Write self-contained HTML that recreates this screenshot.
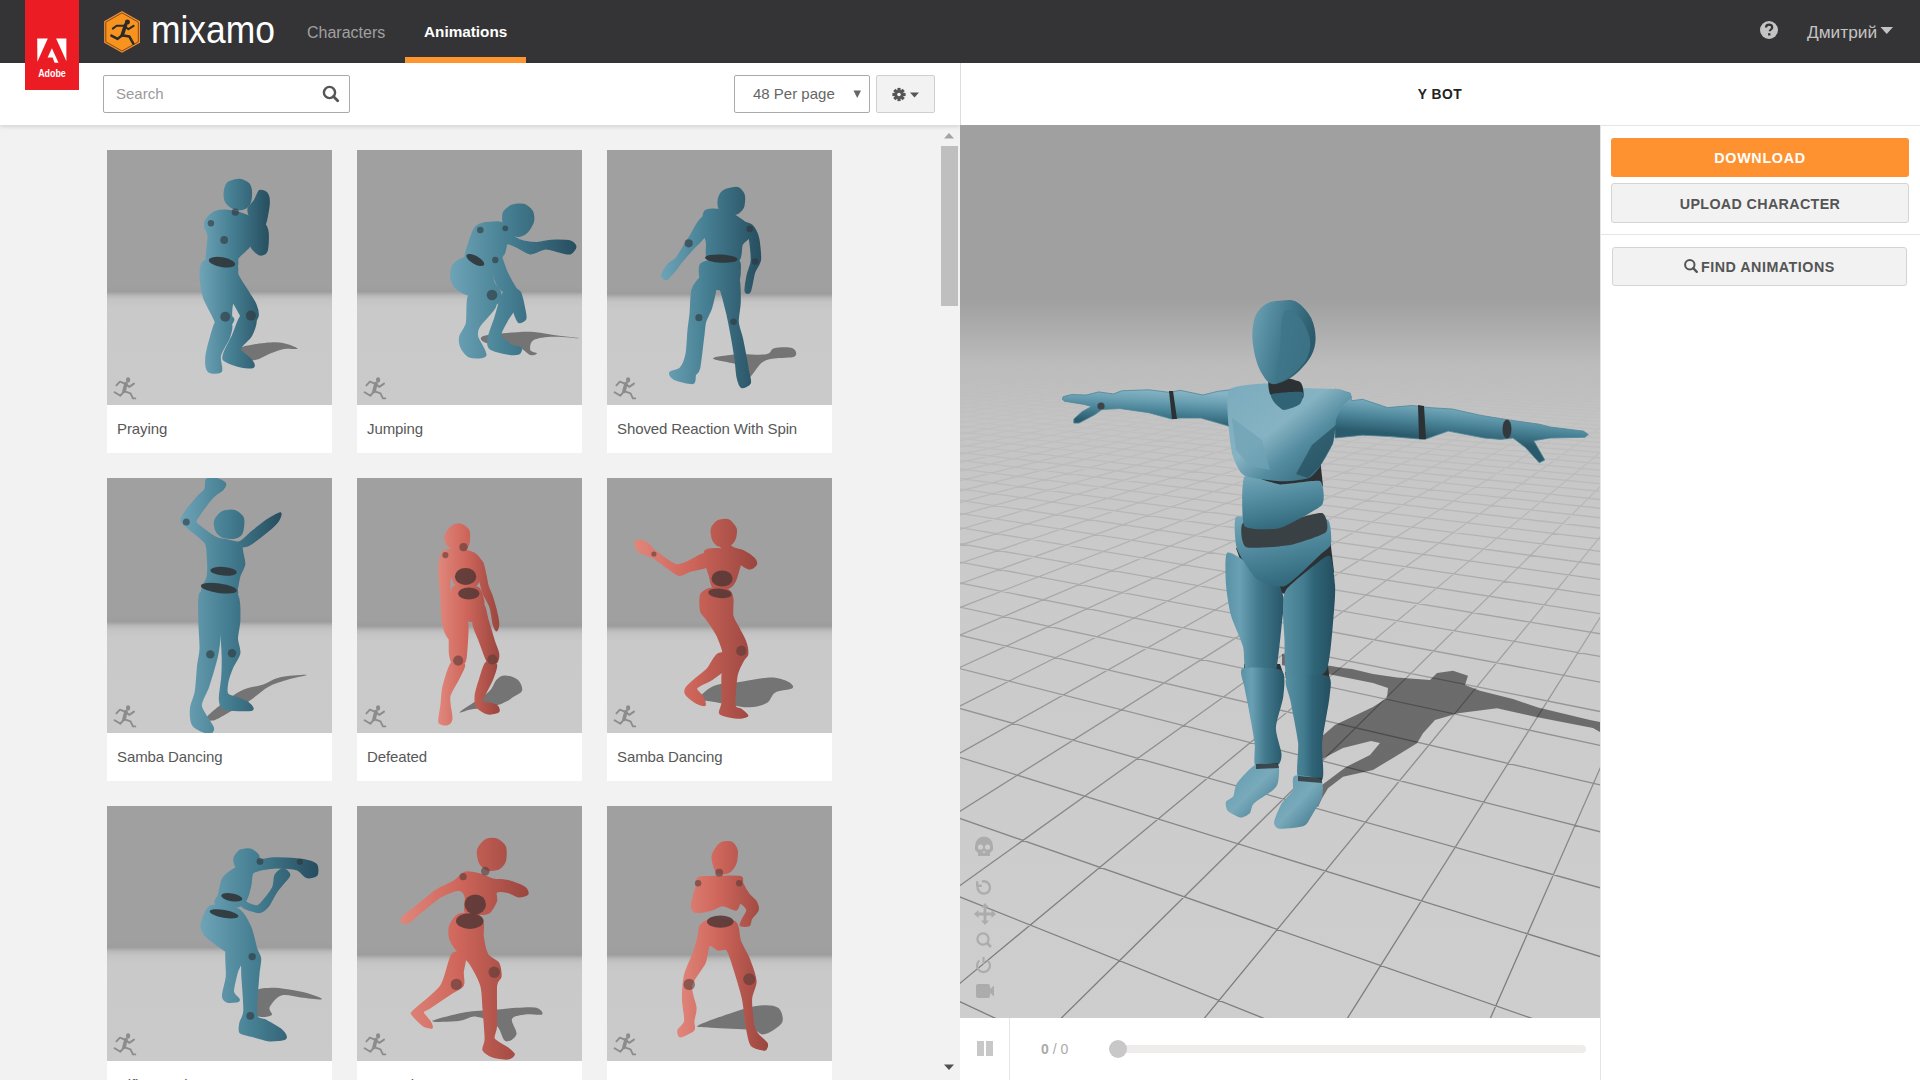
<!DOCTYPE html><html><head><meta charset="utf-8"><style>
*{box-sizing:border-box;margin:0;padding:0}
html,body{width:1920px;height:1080px;overflow:hidden;background:#f2f2f2;font-family:"Liberation Sans",sans-serif}
.abs{position:absolute}
.nav{left:0;top:0;width:1920px;height:63px;background:#343436}
.txt{white-space:nowrap;line-height:1}
</style></head><body>
<div class="abs nav"></div>
<div class="abs" style="left:25px;top:0;width:54px;height:90px;background:#ec1c24;z-index:10"></div>
<svg class="abs" style="left:25px;top:0;z-index:11" width="54" height="89" viewBox="0 0 54 89">
<path d="M12.2 38.6H22.8L12.4 61.7Z" fill="#fff"/><path d="M31.1 38.6H41.4V61.2Z" fill="#fff"/>
<path d="M26.9 48.3L33.5 62.8H29.6L27.6 57.4H22.6Z" fill="#fff"/>
<text x="27" y="76.8" text-anchor="middle" font-family="Liberation Sans" font-weight="bold" font-size="11" fill="#fff" textLength="27.6" lengthAdjust="spacingAndGlyphs">Adobe</text></svg>
<svg class="abs" style="left:102px;top:10px" width="40" height="44" viewBox="0 0 40 44">
<path d="M20 1.1L38 11.2V32.8L20 42.8L2.1 32.8V11.2Z" fill="#e88f3c"/>
<path d="M20 2.9L36.3 12.2V31.8L20 41L3.8 31.8V12.2Z" fill="#f7931e" stroke="#8a4a12" stroke-width="1"/>
<g fill="none" stroke="#2a2a2a" stroke-linecap="round" stroke-linejoin="round">
<circle cx="25.4" cy="11.9" r="2.5" fill="#2a2a2a" stroke="none"/>
<path d="M23.6 14.8L20.2 25.2" stroke-width="3.6"/>
<path d="M22.5 15.8L14.6 15.8L10.8 18.6M23.4 16.8L26.4 19.2L31.6 15.8" stroke-width="2"/>
<path d="M20.2 25.2L15.6 28.9L9.4 25.6M21.2 25.4L27.4 26.6L31.3 33.6" stroke-width="2.5"/>
</g></svg>
<svg class="abs" style="left:148px;top:8px" width="132" height="44"><text x="3" y="35" font-family="Liberation Sans" font-size="39" fill="#fff" textLength="124" lengthAdjust="spacingAndGlyphs">mixamo</text></svg>
<div class="abs txt" style="left:307px;top:24.5px;font-size:16px;color:#a0a0a0">Characters</div>
<div class="abs txt" style="left:424px;top:24px;font-size:15.3px;font-weight:bold;color:#fff">Animations</div>
<div class="abs" style="left:405px;top:57px;width:121px;height:6px;background:#ff9530"></div>
<svg class="abs" style="left:1759px;top:20px" width="20" height="20" viewBox="0 0 20 20"><circle cx="10" cy="10" r="9" fill="#c4c4c4"/>
<path d="M7 7.6c0-1.8 1.3-2.9 3.1-2.9s3.1 1 3.1 2.7c0 2-2.4 2.2-2.4 3.9" fill="none" stroke="#343436" stroke-width="2.2"/><rect x="9.1" y="13.2" width="2.3" height="2.3" fill="#343436"/></svg>
<div class="abs txt" style="left:1807px;top:23.5px;font-size:17.3px;color:#c4c4c4">Дмитрий</div>
<svg class="abs" style="left:1880px;top:26px" width="14" height="9"><path d="M0.5 1h12.5l-6.25 7z" fill="#c4c4c4"/></svg>
<div class="abs" style="left:0;top:63px;width:960px;height:62px;background:#fff;box-shadow:0 2px 4px rgba(0,0,0,0.12)"></div>
<div class="abs" style="left:960px;top:63px;width:960px;height:62px;background:#fff;border-left:1px solid #dcdcdc"></div>
<div class="abs" style="left:103px;top:75px;width:247px;height:38px;border:1px solid #aaa;border-radius:2px;background:#fff"></div>
<div class="abs txt" style="left:116px;top:86px;font-size:15px;color:#9a9a9a">Search</div>
<svg class="abs" style="left:321px;top:84px" width="20" height="20" viewBox="0 0 20 20"><circle cx="8.5" cy="8.5" r="5.6" fill="none" stroke="#555" stroke-width="2.4"/><path d="M12.5 12.5l4.2 4.2" stroke="#555" stroke-width="2.8" stroke-linecap="round"/></svg>
<div class="abs" style="left:734px;top:75px;width:136px;height:38px;border:1px solid #aaa;border-radius:2px;background:#fff"></div>
<div class="abs txt" style="left:753px;top:86px;font-size:15px;color:#666">48 Per page</div>
<svg class="abs" style="left:853px;top:90px" width="9" height="9"><path d="M0.5 0.5h7.5l-3.75 7.5z" fill="#666"/></svg>
<div class="abs" style="left:876px;top:75px;width:59px;height:38px;border:1px solid #cfcfcf;border-radius:2px;background:#f2f2f2"></div>
<svg class="abs" style="left:890px;top:86px" width="32" height="17" viewBox="0 0 32 17">
<g transform="translate(9,8.5)" fill="#555"><circle r="4.6"/>
<g><rect x="-1.6" y="-6.6" width="3.2" height="3.2" transform="rotate(0)"/><rect x="-1.6" y="-6.6" width="3.2" height="3.2" transform="rotate(45)"/><rect x="-1.6" y="-6.6" width="3.2" height="3.2" transform="rotate(90)"/><rect x="-1.6" y="-6.6" width="3.2" height="3.2" transform="rotate(135)"/><rect x="-1.6" y="-6.6" width="3.2" height="3.2" transform="rotate(180)"/><rect x="-1.6" y="-6.6" width="3.2" height="3.2" transform="rotate(225)"/><rect x="-1.6" y="-6.6" width="3.2" height="3.2" transform="rotate(270)"/><rect x="-1.6" y="-6.6" width="3.2" height="3.2" transform="rotate(315)"/></g>
<circle r="1.8" fill="#f2f2f2"/></g>
<path d="M20 6.5h9l-4.5 5z" fill="#555"/></svg>
<div class="abs" style="left:941px;top:146px;width:17px;height:160px;background:#bfbfbf"></div>
<svg class="abs" style="left:943px;top:131px" width="12" height="9"><path d="M1 7.5h10l-5 -5.5z" fill="#a3a3a3"/></svg>
<svg class="abs" style="left:943px;top:1063px" width="12" height="9"><path d="M1 1.5h10l-5 5.5z" fill="#505050"/></svg>
<div class="abs" style="left:107px;top:150px;width:225px;height:303px;background:#fff"></div>
<div class="abs" style="left:107px;top:150px;width:225px;height:255px;background:linear-gradient(#a0a0a0 0px,#a0a0a0 134.7px,#9d9d9d 141.7px,#b8b8b8 145.7px,#c4c4c4 149.7px,#c9c9c9 157.7px,#cacaca 255px)"></div>
<div class="abs txt" style="left:117px;top:421px;font-size:15px;color:#585858;letter-spacing:-0.1px">Praying</div>
<div class="abs" style="left:357px;top:150px;width:225px;height:303px;background:#fff"></div>
<div class="abs" style="left:357px;top:150px;width:225px;height:255px;background:linear-gradient(#a0a0a0 0px,#a0a0a0 134.7px,#9d9d9d 141.7px,#b8b8b8 145.7px,#c4c4c4 149.7px,#c9c9c9 157.7px,#cacaca 255px)"></div>
<div class="abs txt" style="left:367px;top:421px;font-size:15px;color:#585858;letter-spacing:-0.1px">Jumping</div>
<div class="abs" style="left:607px;top:150px;width:225px;height:303px;background:#fff"></div>
<div class="abs" style="left:607px;top:150px;width:225px;height:255px;background:linear-gradient(#a0a0a0 0px,#a0a0a0 137.0px,#9d9d9d 144.0px,#b8b8b8 148.0px,#c4c4c4 152.0px,#c9c9c9 160.0px,#cacaca 255px)"></div>
<div class="abs txt" style="left:617px;top:421px;font-size:15px;color:#585858;letter-spacing:-0.1px">Shoved Reaction With Spin</div>
<div class="abs" style="left:107px;top:478px;width:225px;height:303px;background:#fff"></div>
<div class="abs" style="left:107px;top:478px;width:225px;height:255px;background:linear-gradient(#a0a0a0 0px,#a0a0a0 136.7px,#9d9d9d 143.7px,#b8b8b8 147.7px,#c4c4c4 151.7px,#c9c9c9 159.7px,#cacaca 255px)"></div>
<div class="abs txt" style="left:117px;top:749px;font-size:15px;color:#585858;letter-spacing:-0.1px">Samba Dancing</div>
<div class="abs" style="left:357px;top:478px;width:225px;height:303px;background:#fff"></div>
<div class="abs" style="left:357px;top:478px;width:225px;height:255px;background:linear-gradient(#a0a0a0 0px,#a0a0a0 141.0px,#9d9d9d 148.0px,#b8b8b8 152.0px,#c4c4c4 156.0px,#c9c9c9 164.0px,#cacaca 255px)"></div>
<div class="abs txt" style="left:367px;top:749px;font-size:15px;color:#585858;letter-spacing:-0.1px">Defeated</div>
<div class="abs" style="left:607px;top:478px;width:225px;height:303px;background:#fff"></div>
<div class="abs" style="left:607px;top:478px;width:225px;height:255px;background:linear-gradient(#a0a0a0 0px,#a0a0a0 141.0px,#9d9d9d 148.0px,#b8b8b8 152.0px,#c4c4c4 156.0px,#c9c9c9 164.0px,#cacaca 255px)"></div>
<div class="abs txt" style="left:617px;top:749px;font-size:15px;color:#585858;letter-spacing:-0.1px">Samba Dancing</div>
<div class="abs" style="left:107px;top:806px;width:225px;height:303px;background:#fff"></div>
<div class="abs" style="left:107px;top:806px;width:225px;height:255px;background:linear-gradient(#a0a0a0 0px,#a0a0a0 134.3px,#9d9d9d 141.3px,#b8b8b8 145.3px,#c4c4c4 149.3px,#c9c9c9 157.3px,#cacaca 255px)"></div>
<div class="abs txt" style="left:117px;top:1077px;font-size:15px;color:#585858;letter-spacing:-0.1px">Rifle Punch</div>
<div class="abs" style="left:357px;top:806px;width:225px;height:303px;background:#fff"></div>
<div class="abs" style="left:357px;top:806px;width:225px;height:255px;background:linear-gradient(#a0a0a0 0px,#a0a0a0 141.7px,#9d9d9d 148.7px,#b8b8b8 152.7px,#c4c4c4 156.7px,#c9c9c9 164.7px,#cacaca 255px)"></div>
<div class="abs txt" style="left:367px;top:1077px;font-size:15px;color:#585858;letter-spacing:-0.1px">Capoeira</div>
<div class="abs" style="left:607px;top:806px;width:225px;height:303px;background:#fff"></div>
<div class="abs" style="left:607px;top:806px;width:225px;height:255px;background:linear-gradient(#a0a0a0 0px,#a0a0a0 141.7px,#9d9d9d 148.7px,#b8b8b8 152.7px,#c4c4c4 156.7px,#c9c9c9 164.7px,#cacaca 255px)"></div>
<div class="abs txt" style="left:617px;top:1077px;font-size:15px;color:#585858;letter-spacing:-0.1px">Taunt</div>
<svg class="abs" style="left:0;top:0" width="960" height="1080" viewBox="0 0 960 1080"><defs>
<clipPath id="tc00"><rect x="107" y="150" width="225" height="255"/></clipPath>
<clipPath id="tc01"><rect x="357" y="150" width="225" height="255"/></clipPath>
<clipPath id="tc02"><rect x="607" y="150" width="225" height="255"/></clipPath>
<clipPath id="tc10"><rect x="107" y="478" width="225" height="255"/></clipPath>
<clipPath id="tc11"><rect x="357" y="478" width="225" height="255"/></clipPath>
<clipPath id="tc12"><rect x="607" y="478" width="225" height="255"/></clipPath>
<clipPath id="tc20"><rect x="107" y="806" width="225" height="255"/></clipPath>
<clipPath id="tc21"><rect x="357" y="806" width="225" height="255"/></clipPath>
<clipPath id="tc22"><rect x="607" y="806" width="225" height="255"/></clipPath>
</defs>
<defs><linearGradient id="gt0" gradientUnits="userSpaceOnUse" x1="201" y1="0" x2="269" y2="0"><stop offset="0" stop-color="#6ea3b6"/><stop offset="0.45" stop-color="#467f93"/><stop offset="1" stop-color="#274f60"/></linearGradient></defs>
<g clip-path="url(#tc00)">
<path d="M237.6 348.9C239.4 346.7 246.8 345.6 253.1 344.4C259.4 343.3 269.4 342.2 275.3 342.2C281.3 342.2 285.0 343.3 288.7 344.4C292.4 345.6 298.3 348.1 297.6 348.9C296.8 349.6 288.7 348.1 284.2 348.9C279.8 349.6 275.7 351.5 270.9 353.3C266.1 355.2 260.1 359.3 255.3 360.0C250.5 360.7 245.0 359.6 242.0 357.8C239.0 355.9 235.7 351.1 237.6 348.9Z" fill="#747474" />
<path d="M217.6 320.0C220.2 318.2 229.4 322.1 230.9 324.4C232.4 326.8 230.1 333.6 228.7 337.8C227.2 341.9 220.8 351.1 219.8 355.6C218.7 360.0 222.4 369.0 220.9 371.1C219.4 373.2 210.6 372.9 208.7 371.1C206.7 369.3 206.1 362.2 206.4 357.8C206.7 353.3 209.4 342.8 210.9 337.8C212.4 332.7 214.9 321.8 217.6 320.0Z" fill="url(#gt0)" stroke="url(#gt0)" stroke-width="2.4" stroke-linejoin="round"/>
<path d="M242.0 315.6C245.0 313.5 254.1 317.3 255.3 320.0C256.5 322.7 253.0 331.7 250.9 335.6C248.8 339.4 239.8 345.6 239.8 348.9C239.8 352.1 249.1 357.6 250.9 360.0C252.7 362.4 254.3 365.8 253.1 366.7C251.9 367.6 245.9 367.6 242.0 366.7C238.1 365.8 226.4 362.1 224.2 360.0C222.0 357.9 224.1 354.4 225.3 351.1C226.5 347.9 230.9 340.3 233.1 335.6C235.3 330.8 239.0 317.6 242.0 315.6Z" fill="url(#gt0)" stroke="url(#gt0)" stroke-width="2.4" stroke-linejoin="round"/>
<path d="M202.0 264.4C203.3 261.8 206.4 260.0 210.9 260.0C215.3 260.0 231.8 262.4 235.3 264.4C238.9 266.5 235.8 271.7 237.6 275.6C239.3 279.4 246.3 289.5 248.7 293.3C251.0 297.2 254.1 301.5 255.3 304.4C256.5 307.4 257.9 313.2 257.6 315.6C257.3 317.9 254.9 321.6 253.1 322.2C251.3 322.8 246.9 322.7 244.2 320.0C241.6 317.3 234.9 302.8 233.1 302.2C231.3 301.6 230.9 313.2 230.9 315.6C230.9 317.9 233.7 318.2 233.1 320.0C232.5 321.8 228.5 328.3 226.4 328.9C224.4 329.5 219.3 326.2 217.6 324.4C215.8 322.7 214.9 319.1 213.1 315.6C211.3 312.0 205.9 302.5 204.2 297.8C202.6 293.0 201.2 284.4 200.9 280.0C200.6 275.6 200.7 267.1 202.0 264.4Z" fill="url(#gt0)" stroke="url(#gt0)" stroke-width="2.4" stroke-linejoin="round"/>
<path d="M206.4 220.0C207.8 218.1 212.1 213.4 215.3 212.2C218.6 211.0 226.7 210.7 230.9 211.1C235.0 211.6 243.5 214.4 246.4 215.6C249.4 216.7 250.7 218.8 253.1 220.0C255.5 221.2 262.3 222.7 264.2 224.4C266.1 226.2 267.3 229.8 267.6 233.3C267.9 236.9 267.5 248.3 266.4 251.1C265.4 253.9 261.6 254.7 259.8 254.4C258.0 254.1 254.6 250.5 253.1 248.9C251.6 247.3 249.3 242.5 248.7 242.2C248.1 241.9 250.1 244.6 248.7 246.7C247.2 248.7 239.3 255.1 237.6 257.8C235.8 260.4 239.2 265.8 235.3 266.7C231.5 267.6 212.4 266.8 208.7 264.4C205.0 262.1 207.6 252.7 207.6 248.9C207.6 245.0 209.0 238.5 208.7 235.6C208.4 232.6 205.6 228.7 205.3 226.7C205.0 224.6 205.1 221.9 206.4 220.0Z" fill="url(#gt0)" stroke="url(#gt0)" stroke-width="2.4" stroke-linejoin="round"/>
<path d="M229.8 182.2C231.6 181.5 237.3 179.7 239.8 180.0C242.3 180.3 247.2 182.7 248.7 184.4C250.1 186.2 250.9 190.7 250.9 193.3C250.9 196.0 249.9 202.4 248.7 204.4C247.5 206.5 244.1 208.4 242.0 208.9C239.9 209.3 235.2 208.7 233.1 207.8C231.0 206.9 227.6 204.1 226.4 202.2C225.3 200.3 224.7 195.6 224.7 193.3C224.7 191.1 225.8 187.0 226.4 185.6C227.1 184.1 228.0 183.0 229.8 182.2Z" fill="url(#gt0)" stroke="url(#gt0)" stroke-width="2.4" stroke-linejoin="round"/>
<path d="M259.8 191.1C261.3 190.2 265.3 191.9 266.4 193.3C267.6 194.8 268.7 199.0 268.7 202.2C268.7 205.5 267.0 214.8 266.4 217.8C265.9 220.7 265.4 223.6 264.2 224.4C263.0 225.3 259.3 225.3 257.6 224.4C255.8 223.6 252.1 219.9 250.9 217.8C249.7 215.7 248.1 211.3 248.7 208.9C249.3 206.5 253.9 202.4 255.3 200.0C256.8 197.6 258.3 192.0 259.8 191.1Z" fill="url(#gt0)" stroke="url(#gt0)" stroke-width="2.4" stroke-linejoin="round"/>
<ellipse cx="222.0" cy="262.2" rx="13.3" ry="4.9" transform="rotate(10 222.0 262.2)" fill="#2f3538" opacity="0.9"/>
<circle cx="225.3" cy="316.7" r="5.0" fill="#2f3538" opacity="0.6"/>
<circle cx="250.9" cy="315.6" r="5.0" fill="#2f3538" opacity="0.6"/>
<circle cx="210.9" cy="223.3" r="3.2" fill="#2f3538" opacity="0.6"/>
<circle cx="224.2" cy="240.0" r="3.9" fill="#2f3538" opacity="0.6"/>
<circle cx="235.3" cy="212.2" r="3.6" fill="#2f3538" opacity="0.6"/>
</g>
<defs><linearGradient id="gt1" gradientUnits="userSpaceOnUse" x1="451" y1="0" x2="575" y2="0"><stop offset="0" stop-color="#6ea3b6"/><stop offset="0.45" stop-color="#467f93"/><stop offset="1" stop-color="#274f60"/></linearGradient></defs>
<g clip-path="url(#tc01)">
<path d="M482.0 336.7C484.8 335.0 495.6 334.2 503.7 333.3C511.7 332.5 522.0 331.4 530.3 331.7C538.7 331.9 545.3 333.9 553.7 335.0C562.0 336.1 580.3 338.1 580.3 338.3C580.3 338.6 561.4 336.4 553.7 336.7C545.9 336.9 537.6 337.8 533.7 340.0C529.8 342.2 529.8 347.8 530.3 350.0C530.9 352.2 537.0 352.5 537.0 353.3C537.0 354.2 533.7 356.1 530.3 355.0C527.0 353.9 524.2 348.6 517.0 346.7C509.8 344.7 492.8 345.0 487.0 343.3C481.2 341.7 479.2 338.3 482.0 336.7Z" fill="#747474" />
<path d="M503.7 293.3C506.6 290.0 515.4 291.6 517.0 293.3C518.6 295.1 516.7 303.1 515.3 306.7C514.0 310.2 509.0 316.2 507.0 320.0C505.0 323.8 499.9 331.7 500.3 335.0C500.8 338.3 507.7 343.2 510.3 345.0C513.0 346.8 519.2 347.2 520.3 348.3C521.4 349.4 520.4 352.7 518.7 353.3C516.9 354.0 510.8 354.0 507.0 353.3C503.2 352.7 492.8 350.3 490.3 348.3C487.9 346.3 488.0 342.3 488.7 338.3C489.3 334.3 493.3 324.3 495.3 318.3C497.3 312.3 500.8 296.7 503.7 293.3Z" fill="url(#gt1)" stroke="url(#gt1)" stroke-width="2.4" stroke-linejoin="round"/>
<path d="M468.7 296.7C470.4 293.1 476.8 295.6 480.3 296.7C483.9 297.8 494.4 302.3 495.3 305.0C496.2 307.7 489.2 313.8 487.0 316.7C484.8 319.6 480.0 324.0 478.7 326.7C477.3 329.3 476.1 332.9 477.0 336.7C477.9 340.4 486.2 352.3 485.3 355.0C484.4 357.7 473.4 357.6 470.3 356.7C467.2 355.8 463.3 351.0 462.0 348.3C460.7 345.7 459.7 340.0 460.3 336.7C461.0 333.3 465.9 328.7 467.0 323.3C468.1 318.0 466.9 300.2 468.7 296.7Z" fill="url(#gt1)" stroke="url(#gt1)" stroke-width="2.4" stroke-linejoin="round"/>
<path d="M453.7 265.0C455.6 262.6 461.3 258.6 465.3 258.3C469.3 258.1 480.3 262.0 483.7 263.3C487.0 264.7 489.0 265.7 490.3 268.3C491.7 271.0 492.3 280.0 493.7 283.3C495.0 286.7 499.7 290.9 500.3 293.3C501.0 295.8 500.0 300.1 498.7 301.7C497.3 303.2 492.8 305.4 490.3 305.0C487.9 304.6 483.7 299.9 480.3 298.3C477.0 296.8 468.7 294.9 465.3 293.3C462.0 291.8 457.2 288.9 455.3 286.7C453.4 284.4 451.4 279.6 451.2 276.7C450.9 273.8 451.8 267.4 453.7 265.0Z" fill="url(#gt1)" stroke="url(#gt1)" stroke-width="2.4" stroke-linejoin="round"/>
<path d="M475.3 228.3C477.6 225.4 481.8 224.0 485.3 223.3C488.9 222.7 498.7 222.0 502.0 223.3C505.3 224.7 508.6 231.3 510.3 233.3C512.1 235.3 513.6 237.2 515.3 238.3C517.1 239.4 520.8 241.0 523.7 241.7C526.6 242.3 534.1 243.3 537.0 243.3C539.9 243.3 542.7 242.0 545.3 241.7C548.0 241.3 553.7 240.8 557.0 240.8C560.3 240.8 567.9 240.9 570.3 241.7C572.8 242.4 575.3 245.1 575.3 246.7C575.3 248.2 572.3 252.7 570.3 253.3C568.3 254.0 563.7 252.3 560.3 251.7C557.0 251.0 549.3 248.1 545.3 248.3C541.3 248.6 534.1 253.6 530.3 253.3C526.6 253.1 520.1 248.0 517.0 246.7C513.9 245.3 508.8 242.4 507.0 243.3C505.2 244.2 505.2 250.7 503.7 253.3C502.1 256.0 497.6 261.3 495.3 263.3C493.1 265.3 490.3 268.1 487.0 268.3C483.7 268.6 473.2 266.1 470.3 265.0C467.4 263.9 465.6 262.7 465.3 260.0C465.1 257.3 467.3 249.2 468.7 245.0C470.0 240.8 473.1 231.2 475.3 228.3Z" fill="url(#gt1)" stroke="url(#gt1)" stroke-width="2.4" stroke-linejoin="round"/>
<path d="M485.3 233.3C486.9 231.6 492.1 229.9 493.7 231.7C495.2 233.4 495.9 242.9 497.0 246.7C498.1 250.4 500.7 256.4 502.0 260.0C503.3 263.6 505.2 269.6 507.0 273.3C508.8 277.1 513.6 285.7 515.3 288.3C517.1 291.0 519.2 290.9 520.3 293.3C521.4 295.8 523.0 303.3 523.7 306.7C524.3 310.0 526.0 316.3 525.3 318.3C524.7 320.3 520.2 322.8 518.7 321.7C517.1 320.6 514.8 313.3 513.7 310.0C512.6 306.7 512.3 299.8 510.3 296.7C508.3 293.6 500.9 289.8 498.7 286.7C496.4 283.6 494.8 276.7 493.7 273.3C492.6 270.0 491.9 265.4 490.3 261.7C488.8 257.9 482.7 248.8 482.0 245.0C481.3 241.2 483.8 235.1 485.3 233.3Z" fill="url(#gt1)" stroke="url(#gt1)" stroke-width="2.4" stroke-linejoin="round"/>
<path d="M503.7 213.3C504.7 210.6 509.3 206.9 512.0 205.8C514.7 204.7 521.0 204.2 523.7 205.0C526.3 205.8 530.8 209.4 532.0 211.7C533.2 213.9 533.5 219.0 532.8 221.7C532.2 224.3 528.9 229.8 527.0 231.7C525.1 233.6 520.9 235.6 518.7 235.8C516.4 236.1 512.2 234.6 510.3 233.3C508.4 232.1 505.4 229.3 504.5 226.7C503.6 224.0 502.7 216.1 503.7 213.3Z" fill="url(#gt1)" stroke="url(#gt1)" stroke-width="2.4" stroke-linejoin="round"/>
<ellipse cx="475.3" cy="260.0" rx="10.0" ry="4.0" transform="rotate(30 475.3 260.0)" fill="#2f3538" opacity="0.9"/>
<circle cx="492.0" cy="295.0" r="5.3" fill="#2f3538" opacity="0.6"/>
<circle cx="495.3" cy="260.0" r="3.2" fill="#2f3538" opacity="0.6"/>
<circle cx="505.3" cy="228.3" r="2.9" fill="#2f3538" opacity="0.6"/>
<circle cx="480.3" cy="230.0" r="3.3" fill="#2f3538" opacity="0.6"/>
</g>
<defs><linearGradient id="gt2" gradientUnits="userSpaceOnUse" x1="662" y1="0" x2="760" y2="0"><stop offset="0" stop-color="#6ea3b6"/><stop offset="0.45" stop-color="#467f93"/><stop offset="1" stop-color="#274f60"/></linearGradient></defs>
<g clip-path="url(#tc02)">
<path d="M713.1 358.4C713.1 356.7 728.8 355.0 737.6 354.3C746.4 353.7 760.0 355.4 766.1 354.3C772.2 353.3 769.9 349.2 774.3 348.2C778.7 347.2 789.2 346.9 792.6 348.2C796.0 349.6 797.7 354.7 794.7 356.4C791.6 358.1 779.7 357.4 774.3 358.4C768.8 359.4 766.5 359.1 762.0 362.5C757.6 365.9 751.5 377.4 747.8 378.8C744.0 380.1 741.3 373.0 739.6 370.6C737.9 368.3 742.0 366.6 737.6 364.5C733.2 362.5 713.1 360.1 713.1 358.4Z" fill="#747474" />
<path d="M702.9 276.9C705.9 276.1 714.1 278.9 715.2 283.0C716.3 287.1 712.5 302.3 711.1 307.5C709.7 312.6 706.1 317.7 705.0 321.7C703.9 325.8 703.8 331.8 702.9 338.0C702.1 344.3 700.0 363.7 698.9 368.6C697.8 373.5 695.6 372.8 694.8 374.7C694.0 376.6 695.5 382.3 692.8 382.9C690.0 383.4 677.4 380.1 674.4 378.8C671.4 377.4 669.5 374.0 670.3 372.7C671.2 371.3 678.4 371.0 680.5 368.6C682.7 366.2 685.6 359.5 686.6 354.3C687.7 349.2 688.1 335.3 688.7 329.9C689.2 324.4 690.2 319.0 690.7 313.6C691.3 308.1 691.1 294.0 692.8 289.1C694.4 284.2 700.0 277.7 702.9 276.9Z" fill="url(#gt2)" stroke="url(#gt2)" stroke-width="2.4" stroke-linejoin="round"/>
<path d="M721.3 285.0C723.2 282.3 735.1 274.7 737.6 276.9C740.0 279.1 739.6 295.4 739.6 301.4C739.6 307.3 737.3 316.8 737.6 321.7C737.9 326.6 740.6 333.1 741.7 338.0C742.8 342.9 744.9 354.1 745.7 358.4C746.6 362.8 747.2 367.4 747.8 370.6C748.3 373.9 750.6 380.7 749.8 382.9C749.0 385.0 743.3 387.8 741.7 386.9C740.0 386.1 738.4 380.6 737.6 376.8C736.8 372.9 736.4 364.1 735.6 358.4C734.7 352.7 732.6 339.9 731.5 334.0C730.4 328.0 728.5 318.5 727.4 313.6C726.3 308.7 724.1 301.1 723.3 297.3C722.5 293.5 719.4 287.8 721.3 285.0Z" fill="url(#gt2)" stroke="url(#gt2)" stroke-width="2.4" stroke-linejoin="round"/>
<path d="M700.9 264.7C702.5 262.2 708.2 261.1 713.1 260.6C718.0 260.0 734.1 259.2 737.6 260.6C741.1 262.0 739.6 268.1 739.6 270.8C739.6 273.5 739.8 278.5 737.6 281.0C735.4 283.4 727.1 288.3 723.3 289.1C719.5 289.9 712.1 288.4 709.1 287.1C706.1 285.7 702.0 281.9 700.9 278.9C699.8 275.9 699.3 267.1 700.9 264.7Z" fill="url(#gt2)" stroke="url(#gt2)" stroke-width="2.4" stroke-linejoin="round"/>
<path d="M705.0 211.7C706.3 209.5 710.1 209.6 713.1 209.6C716.1 209.6 723.3 210.1 727.4 211.7C731.5 213.3 740.4 219.7 743.7 221.9C747.0 224.0 751.0 226.1 751.9 228.0C752.7 229.9 751.2 234.0 749.8 236.1C748.5 238.3 743.3 241.0 741.7 244.3C740.0 247.5 741.9 258.4 737.6 260.6C733.2 262.8 713.1 263.0 709.1 260.6C705.0 258.1 707.8 246.9 707.0 242.3C706.2 237.6 703.2 230.0 702.9 225.9C702.7 221.9 703.6 213.9 705.0 211.7Z" fill="url(#gt2)" stroke="url(#gt2)" stroke-width="2.4" stroke-linejoin="round"/>
<path d="M707.0 215.8C705.4 214.9 701.0 219.2 698.9 221.9C696.7 224.6 692.4 233.4 690.7 236.1C689.1 238.9 688.5 239.3 686.6 242.3C684.7 245.2 678.9 255.6 676.5 258.6C674.0 261.5 670.2 262.5 668.3 264.7C666.4 266.8 662.5 273.0 662.2 274.9C661.9 276.8 664.6 279.5 666.3 278.9C667.9 278.4 672.5 273.0 674.4 270.8C676.3 268.6 678.1 265.6 680.5 262.6C683.0 259.6 690.0 251.4 692.8 248.4C695.5 245.4 698.5 242.9 700.9 240.2C703.4 237.5 710.3 231.2 711.1 228.0C711.9 224.7 708.7 216.6 707.0 215.8Z" fill="url(#gt2)" stroke="url(#gt2)" stroke-width="2.4" stroke-linejoin="round"/>
<path d="M743.7 223.9C744.0 222.3 750.0 224.0 751.9 225.9C753.8 227.8 756.9 233.8 758.0 238.2C759.1 242.5 760.0 255.0 760.0 258.6C760.0 262.1 758.8 262.8 758.0 264.7C757.2 266.6 755.0 269.3 753.9 272.8C752.8 276.4 750.9 288.7 749.8 291.2C748.7 293.6 746.0 293.3 745.7 291.2C745.5 289.0 747.0 278.9 747.8 274.9C748.6 270.8 751.6 265.5 751.9 260.6C752.1 255.7 750.9 243.1 749.8 238.2C748.7 233.3 743.4 225.5 743.7 223.9Z" fill="url(#gt2)" stroke="url(#gt2)" stroke-width="2.4" stroke-linejoin="round"/>
<path d="M719.3 197.4C720.1 195.1 722.9 191.5 725.4 190.3C727.8 189.1 735.1 187.6 737.6 188.2C740.0 188.9 743.0 192.8 743.7 195.4C744.4 198.0 743.8 205.2 742.7 207.6C741.6 210.1 737.9 213.0 735.6 213.7C733.2 214.4 727.5 213.5 725.4 212.7C723.2 211.9 720.1 209.6 719.3 207.6C718.4 205.6 718.4 199.7 719.3 197.4Z" fill="url(#gt2)" stroke="url(#gt2)" stroke-width="2.4" stroke-linejoin="round"/>
<ellipse cx="721.3" cy="258.6" rx="16.3" ry="4.1" transform="rotate(3 721.3 258.6)" fill="#2f3538" opacity="0.9"/>
<circle cx="688.7" cy="243.3" r="4.1" fill="#2f3538" opacity="0.6"/>
<circle cx="749.8" cy="229.0" r="3.3" fill="#2f3538" opacity="0.6"/>
<circle cx="754.9" cy="261.6" r="3.3" fill="#2f3538" opacity="0.6"/>
<circle cx="698.9" cy="317.7" r="3.6" fill="#2f3538" opacity="0.6"/>
<circle cx="733.5" cy="321.7" r="3.3" fill="#2f3538" opacity="0.6"/>
</g>
<defs><linearGradient id="gt3" gradientUnits="userSpaceOnUse" x1="181" y1="0" x2="280" y2="0"><stop offset="0" stop-color="#6ea3b6"/><stop offset="0.45" stop-color="#467f93"/><stop offset="1" stop-color="#274f60"/></linearGradient></defs>
<g clip-path="url(#tc10)">
<path d="M207.9 715.8C212.3 711.0 230.0 696.9 239.2 691.7C248.5 686.5 256.5 686.9 263.3 684.5C270.1 682.1 272.9 678.9 280.2 677.3C287.4 675.7 305.5 674.5 306.7 674.9C307.9 675.3 293.8 677.7 287.4 679.7C281.0 681.7 274.6 683.3 268.1 686.9C261.7 690.5 255.7 696.9 248.9 701.3C242.0 705.8 233.2 710.2 227.2 713.4C221.2 716.6 216.0 720.2 212.8 720.6C209.5 721.0 203.5 720.6 207.9 715.8Z" fill="#747474" />
<path d="M200.7 593.0C203.3 589.8 216.1 591.9 218.8 595.4C221.4 598.9 220.5 613.1 220.5 619.5C220.5 625.9 219.3 638.4 218.8 643.6C218.2 648.7 217.8 652.2 216.4 658.0C214.9 663.8 210.0 680.5 207.9 686.9C205.8 693.3 200.1 700.7 200.7 706.2C201.4 711.6 211.8 724.3 212.8 727.8C213.7 731.4 210.5 733.0 207.9 732.6C205.4 732.3 195.7 728.6 193.5 725.4C191.2 722.2 190.8 713.1 191.1 708.6C191.4 704.1 194.9 697.5 195.9 691.7C196.9 685.9 197.7 671.0 198.3 665.2C198.9 659.4 200.6 654.5 200.7 648.4C200.9 642.3 199.5 626.9 199.5 619.5C199.5 612.1 198.1 596.2 200.7 593.0Z" fill="url(#gt3)" stroke="url(#gt3)" stroke-width="2.4" stroke-linejoin="round"/>
<path d="M215.2 595.4C217.2 590.6 233.6 592.2 236.8 595.4C240.0 598.6 239.2 613.7 239.2 619.5C239.2 625.3 236.8 634.2 236.8 638.7C236.8 643.2 239.9 649.3 239.2 653.2C238.6 657.0 233.6 663.8 232.0 667.6C230.4 671.5 227.8 678.5 227.2 682.1C226.6 685.6 225.6 691.9 227.2 694.1C228.8 696.4 236.3 697.7 239.2 698.9C242.1 700.2 247.3 702.3 248.9 703.8C250.5 705.2 254.5 709.1 251.3 709.8C248.1 710.4 229.0 710.0 224.8 708.6C220.6 707.1 220.3 703.1 220.0 698.9C219.7 694.8 222.0 682.7 222.4 677.3C222.8 671.8 223.0 664.1 222.9 658.0C222.7 651.9 222.2 639.9 221.2 631.5C220.2 623.2 213.1 600.2 215.2 595.4Z" fill="url(#gt3)" stroke="url(#gt3)" stroke-width="2.4" stroke-linejoin="round"/>
<path d="M181.4 520.8C181.1 518.5 184.0 514.3 186.3 511.1C188.5 507.9 195.7 499.6 198.3 496.7C200.9 493.8 204.4 491.7 205.5 489.4C206.7 487.2 205.4 481.3 206.7 479.8C208.0 478.4 212.8 478.1 215.2 478.6C217.6 479.1 223.8 482.0 224.8 483.4C225.8 484.9 224.0 487.7 222.4 489.4C220.8 491.2 216.0 493.1 212.8 496.7C209.5 500.2 200.6 512.4 198.3 515.9C196.1 519.5 193.6 520.3 195.9 523.2C198.1 526.0 211.3 535.4 215.2 537.6C219.0 539.9 221.6 539.4 224.8 540.0C228.0 540.7 235.7 543.4 239.2 542.4C242.8 541.5 248.1 535.4 251.3 532.8C254.5 530.2 260.7 525.1 263.3 523.2C265.9 521.2 268.3 519.6 270.5 518.3C272.8 517.1 279.2 513.2 280.2 513.5C281.1 513.8 279.4 518.5 277.8 520.8C276.2 523.0 272.0 527.2 268.1 530.4C264.3 533.6 252.4 542.6 248.9 544.8C245.3 547.1 242.3 544.7 241.6 547.2C241.0 549.8 244.4 560.2 244.1 564.1C243.7 567.9 240.2 572.9 239.2 576.1C238.3 579.3 237.5 585.3 236.8 588.2C236.2 591.1 238.9 597.2 234.4 597.8C229.9 598.4 206.7 595.9 203.1 593.0C199.6 590.1 207.3 580.9 207.9 576.1C208.6 571.3 208.3 561.4 207.9 556.9C207.6 552.4 208.1 546.3 205.5 542.4C203.0 538.6 191.9 530.9 188.7 528.0C185.5 525.1 181.8 523.0 181.4 520.8Z" fill="url(#gt3)" stroke="url(#gt3)" stroke-width="2.4" stroke-linejoin="round"/>
<path d="M215.2 520.8C216.0 518.3 219.8 513.6 222.4 512.3C225.0 511.0 231.7 510.3 234.4 511.1C237.2 511.9 241.9 515.5 242.8 518.3C243.8 521.2 242.8 530.2 241.6 532.8C240.5 535.4 237.0 537.1 234.4 537.6C231.9 538.1 224.8 537.4 222.4 536.4C220.0 535.4 217.3 532.5 216.4 530.4C215.4 528.3 214.4 523.2 215.2 520.8Z" fill="url(#gt3)" stroke="url(#gt3)" stroke-width="2.4" stroke-linejoin="round"/>
<ellipse cx="223.6" cy="571.3" rx="13.2" ry="4.3" transform="rotate(5 223.6 571.3)" fill="#2f3538" opacity="0.9"/>
<ellipse cx="218.8" cy="588.2" rx="18.1" ry="4.8" transform="rotate(8 218.8 588.2)" fill="#2f3538" opacity="0.9"/>
<circle cx="210.3" cy="654.4" r="4.2" fill="#2f3538" opacity="0.6"/>
<circle cx="232.0" cy="653.2" r="4.2" fill="#2f3538" opacity="0.6"/>
<circle cx="186.3" cy="522.0" r="3.5" fill="#2f3538" opacity="0.6"/>
</g>
<defs><linearGradient id="gt4" gradientUnits="userSpaceOnUse" x1="439" y1="0" x2="499" y2="0"><stop offset="0" stop-color="#e0867b"/><stop offset="0.45" stop-color="#cf665b"/><stop offset="1" stop-color="#9a463f"/></linearGradient></defs>
<g clip-path="url(#tc11)">
<path d="M488.0 692.6C494.0 687.2 493.7 682.6 496.5 679.8C499.4 676.9 501.5 675.5 505.0 675.5C508.6 675.5 515.0 677.3 517.8 679.8C520.7 682.3 522.8 687.6 522.1 690.4C521.4 693.3 516.1 695.0 513.6 696.8C511.1 698.6 510.0 699.7 507.2 701.1C504.3 702.5 502.6 703.9 496.5 705.3C490.5 706.8 477.0 708.5 470.9 709.6C464.9 710.7 457.4 714.6 460.3 711.7C463.1 708.9 482.0 697.9 488.0 692.6Z" fill="#747474" />
<path d="M451.8 662.7C454.6 659.9 463.7 662.6 464.5 664.8C465.4 667.1 460.1 675.5 458.2 679.8C456.2 684.0 450.5 691.7 449.6 696.8C448.8 701.9 452.0 714.4 451.8 718.1C451.5 721.8 449.2 724.0 447.5 724.5C445.8 725.1 439.8 724.9 439.0 722.4C438.1 719.8 440.5 710.2 441.1 705.3C441.7 700.5 441.8 691.8 443.2 686.2C444.7 680.5 448.9 665.6 451.8 662.7Z" fill="url(#gt4)" stroke="url(#gt4)" stroke-width="1.4" stroke-linejoin="round"/>
<path d="M485.9 662.7C488.1 660.7 495.7 662.6 496.5 664.8C497.4 667.1 494.0 675.5 492.3 679.8C490.5 684.0 485.1 694.0 483.7 696.8C482.3 699.7 479.9 699.9 481.6 701.1C483.3 702.2 494.2 703.9 496.5 705.3C498.8 706.8 499.8 710.6 498.6 711.7C497.5 712.9 490.8 714.4 488.0 713.9C485.1 713.3 479.0 709.7 477.3 707.5C475.6 705.2 474.9 700.5 475.2 696.8C475.5 693.1 478.0 684.3 479.5 679.8C480.9 675.2 483.6 664.7 485.9 662.7Z" fill="url(#gt4)" stroke="url(#gt4)" stroke-width="1.4" stroke-linejoin="round"/>
<path d="M450.7 600.9C452.4 598.1 460.1 608.4 462.4 611.6C464.7 614.7 467.2 619.2 467.7 624.4C468.3 629.5 467.1 644.8 466.7 649.9C466.2 655.0 466.2 660.7 464.5 662.7C462.8 664.7 455.9 666.0 453.9 664.8C451.9 663.7 450.2 658.5 449.6 654.2C449.1 649.9 449.5 640.0 449.6 632.9C449.8 625.8 449.0 603.7 450.7 600.9Z" fill="url(#gt4)" stroke="url(#gt4)" stroke-width="1.4" stroke-linejoin="round"/>
<path d="M475.2 611.6C476.6 609.0 482.0 604.0 483.7 605.2C485.4 606.3 486.6 615.3 488.0 620.1C489.4 624.9 493.0 636.9 494.4 641.4C495.8 645.9 498.4 651.3 498.6 654.2C498.9 657.0 497.9 661.6 496.5 662.7C495.1 663.9 490.3 665.6 488.0 662.7C485.7 659.9 481.5 646.5 479.5 641.4C477.5 636.3 473.6 628.3 473.1 624.4C472.5 620.4 473.8 614.1 475.2 611.6Z" fill="url(#gt4)" stroke="url(#gt4)" stroke-width="1.4" stroke-linejoin="round"/>
<path d="M455.0 586.0C458.5 585.0 473.6 585.6 477.3 587.1C481.0 588.5 481.8 593.9 482.7 596.6C483.5 599.3 484.2 604.7 483.7 607.3C483.3 609.9 481.2 614.0 479.5 615.8C477.8 617.7 473.2 620.9 470.9 621.2C468.7 621.4 464.8 620.1 462.4 618.0C460.0 615.8 454.4 608.3 452.8 605.2C451.3 602.0 450.4 597.1 450.7 594.5C451.0 592.0 451.4 587.0 455.0 586.0Z" fill="url(#gt4)" stroke="url(#gt4)" stroke-width="1.4" stroke-linejoin="round"/>
<path d="M443.2 550.8C443.9 549.4 450.2 549.6 453.9 549.8C457.6 549.9 467.5 550.8 470.9 551.9C474.3 553.0 477.9 556.0 479.5 558.3C481.0 560.6 482.7 566.1 482.7 568.9C482.7 571.8 480.5 577.3 479.5 579.6C478.5 581.9 477.5 585.0 475.2 586.0C472.9 587.0 465.1 587.3 462.4 587.1C459.7 586.8 456.5 585.7 455.0 583.9C453.4 582.0 451.5 576.3 450.7 573.2C449.8 570.1 449.6 563.4 448.6 560.4C447.6 557.4 442.5 552.2 443.2 550.8Z" fill="url(#gt4)" stroke="url(#gt4)" stroke-width="1.4" stroke-linejoin="round"/>
<path d="M442.2 553.0C443.6 551.0 448.5 551.9 449.6 554.0C450.8 556.2 450.7 564.7 450.7 568.9C450.7 573.2 449.6 581.7 449.6 586.0C449.6 590.3 450.4 596.9 450.7 600.9C451.0 604.9 451.2 612.7 451.8 615.8C452.3 619.0 454.4 621.5 455.0 624.4C455.5 627.2 456.4 634.9 456.0 637.1C455.6 639.4 453.2 642.0 451.8 641.4C450.3 640.8 446.6 635.7 445.4 632.9C444.1 630.0 442.7 624.4 442.2 620.1C441.6 615.8 441.4 605.5 441.1 600.9C440.8 596.4 440.3 590.3 440.0 586.0C439.8 581.7 438.7 573.3 439.0 568.9C439.3 564.5 440.7 554.9 442.2 553.0Z" fill="url(#gt4)" stroke="url(#gt4)" stroke-width="1.4" stroke-linejoin="round"/>
<path d="M477.3 558.3C478.0 557.4 481.5 560.3 482.7 562.5C483.8 564.8 485.1 572.2 485.9 575.3C486.6 578.5 487.1 583.1 488.0 586.0C488.8 588.8 491.1 593.2 492.3 596.6C493.4 600.1 495.7 607.9 496.5 611.6C497.4 615.3 498.6 621.8 498.6 624.4C498.6 626.9 497.2 630.7 496.5 630.7C495.8 630.7 494.2 627.5 493.3 624.4C492.5 621.2 491.4 611.3 490.1 607.3C488.8 603.3 485.0 597.6 483.7 594.5C482.4 591.4 481.4 587.3 480.5 583.9C479.7 580.4 477.8 572.3 477.3 568.9C476.9 565.5 476.6 559.1 477.3 558.3Z" fill="url(#gt4)" stroke="url(#gt4)" stroke-width="1.4" stroke-linejoin="round"/>
<path d="M445.4 534.8C446.1 532.6 449.8 527.7 451.8 526.3C453.7 524.9 458.0 523.6 460.3 524.2C462.6 524.7 467.7 528.0 468.8 530.6C469.9 533.1 469.4 540.8 468.8 543.4C468.2 545.9 466.5 548.9 464.5 549.8C462.6 550.6 456.3 550.6 453.9 549.8C451.5 548.9 447.6 545.4 446.4 543.4C445.3 541.4 444.7 537.1 445.4 534.8Z" fill="url(#gt4)" stroke="url(#gt4)" stroke-width="1.4" stroke-linejoin="round"/>
<ellipse cx="465.6" cy="576.4" rx="10.7" ry="8.5" transform="rotate(0 465.6 576.4)" fill="#5a3a37" opacity="0.9"/>
<ellipse cx="468.8" cy="593.4" rx="10.7" ry="6.0" transform="rotate(0 468.8 593.4)" fill="#5a3a37" opacity="0.9"/>
<circle cx="458.2" cy="660.6" r="5.1" fill="#5a3a37" opacity="0.6"/>
<circle cx="492.3" cy="659.5" r="5.1" fill="#5a3a37" opacity="0.6"/>
<circle cx="463.5" cy="547.2" r="4.1" fill="#5a3a37" opacity="0.6"/>
<circle cx="445.4" cy="555.1" r="3.1" fill="#5a3a37" opacity="0.6"/>
</g>
<defs><linearGradient id="gt5" gradientUnits="userSpaceOnUse" x1="635" y1="0" x2="756" y2="0"><stop offset="0" stop-color="#e0867b"/><stop offset="0.45" stop-color="#cf665b"/><stop offset="1" stop-color="#9a463f"/></linearGradient></defs>
<g clip-path="url(#tc12)">
<path d="M713.6 686.0C721.0 682.8 731.7 683.2 741.3 681.8C750.9 680.4 763.3 677.5 771.1 677.5C778.9 677.5 784.6 680.0 788.1 681.8C791.7 683.6 794.5 686.4 792.4 688.2C790.3 689.9 779.6 689.9 775.4 692.4C771.1 694.9 771.1 700.6 766.8 703.1C762.6 705.6 755.5 707.0 749.8 707.3C744.1 707.7 739.9 706.3 732.8 705.2C725.7 704.1 713.2 701.7 707.2 701.0C701.2 700.2 695.5 703.4 696.5 701.0C697.6 698.5 706.1 689.2 713.6 686.0Z" fill="#747474" />
<path d="M717.8 654.1C721.5 652.1 733.5 652.4 734.9 654.1C736.3 655.8 731.6 663.5 728.5 666.9C725.4 670.3 715.7 676.8 711.5 679.7C707.2 682.5 697.7 685.9 696.5 688.2C695.4 690.4 701.8 694.4 702.9 696.7C704.1 699.0 705.9 704.4 705.1 705.2C704.2 706.1 699.1 704.5 696.5 703.1C694.0 701.7 687.3 696.6 685.9 694.6C684.5 692.6 684.8 690.2 685.9 688.2C687.0 686.2 691.6 682.2 694.4 679.7C697.3 677.1 704.1 672.4 707.2 669.0C710.3 665.6 714.2 656.1 717.8 654.1Z" fill="url(#gt5)" stroke="url(#gt5)" stroke-width="1.4" stroke-linejoin="round"/>
<path d="M700.8 594.5C702.2 591.3 707.8 588.6 711.5 588.1C715.1 587.5 725.7 588.8 728.5 590.2C731.3 591.6 732.2 595.3 732.8 598.7C733.3 602.1 731.9 611.8 732.8 615.8C733.6 619.7 737.4 625.1 739.1 628.5C740.8 631.9 744.4 637.9 745.5 641.3C746.7 644.7 747.9 651.5 747.7 654.1C747.4 656.7 744.8 657.6 743.4 660.5C742.0 663.3 738.2 669.4 737.0 675.4C735.9 681.4 734.3 700.7 734.9 705.2C735.5 709.8 739.6 708.1 741.3 709.5C743.0 710.9 748.2 714.7 747.7 715.9C747.1 717.0 740.7 718.3 737.0 718.0C733.3 717.7 722.0 715.7 720.0 713.7C718.0 711.7 721.8 708.2 722.1 703.1C722.4 698.0 721.8 681.4 722.1 675.4C722.4 669.4 724.8 663.5 724.2 658.4C723.7 653.2 720.1 642.2 717.8 637.1C715.6 631.9 709.5 623.4 707.2 620.0C704.9 616.6 701.7 614.9 700.8 611.5C700.0 608.1 699.4 597.6 700.8 594.5Z" fill="url(#gt5)" stroke="url(#gt5)" stroke-width="1.4" stroke-linejoin="round"/>
<path d="M634.8 543.3C634.8 541.8 637.3 540.1 639.0 540.1C640.7 540.1 645.3 541.8 647.6 543.3C649.8 544.9 652.4 549.0 656.1 551.9C659.8 554.7 671.3 563.2 675.2 564.6C679.2 566.1 682.2 563.9 685.9 562.5C689.6 561.1 700.1 554.8 702.9 554.0C705.8 553.1 706.6 554.4 707.2 556.1C707.8 557.8 709.5 564.8 707.2 566.8C704.9 568.8 693.8 569.9 690.2 571.0C686.5 572.2 682.3 575.6 679.5 575.3C676.7 575.0 672.3 571.2 668.9 568.9C665.5 566.6 657.9 560.5 653.9 558.2C650.0 556.0 641.6 553.8 639.0 551.9C636.5 549.9 634.8 544.9 634.8 543.3Z" fill="url(#gt5)" stroke="url(#gt5)" stroke-width="1.4" stroke-linejoin="round"/>
<path d="M705.1 550.8C706.9 548.7 716.0 548.5 720.0 548.7C724.0 548.8 732.0 550.6 734.9 551.9C737.7 553.1 740.7 556.0 741.3 558.2C741.8 560.5 740.0 565.8 739.1 568.9C738.3 572.0 736.3 579.1 734.9 581.7C733.5 584.2 731.3 587.2 728.5 588.1C725.7 588.9 716.1 589.8 713.6 588.1C711.0 586.4 710.3 578.4 709.3 575.3C708.3 572.2 706.7 567.9 706.1 564.6C705.6 561.4 703.2 552.9 705.1 550.8Z" fill="url(#gt5)" stroke="url(#gt5)" stroke-width="1.4" stroke-linejoin="round"/>
<path d="M732.8 547.6C735.6 549.2 740.6 549.4 743.4 550.8C746.2 552.2 752.4 556.4 754.1 558.2C755.8 560.1 756.8 563.2 756.2 564.6C755.6 566.1 751.8 568.9 749.8 568.9C747.8 568.9 743.0 565.8 741.3 564.6C739.6 563.5 739.3 562.4 737.0 560.4C734.7 558.4 727.1 552.3 724.2 549.7C721.4 547.2 716.0 542.6 715.7 541.2C715.4 539.8 719.8 538.2 722.1 539.1C724.4 539.9 729.9 546.0 732.8 547.6Z" fill="url(#gt5)" stroke="url(#gt5)" stroke-width="1.4" stroke-linejoin="round"/>
<path d="M711.5 528.4C712.2 526.0 715.6 522.1 717.8 521.0C720.1 519.8 726.1 518.9 728.5 519.9C730.9 520.9 735.1 525.9 736.0 528.4C736.8 531.0 735.9 536.8 734.9 539.1C733.9 541.4 730.8 544.6 728.5 545.5C726.2 546.3 720.0 546.3 717.8 545.5C715.7 544.6 713.4 541.4 712.5 539.1C711.7 536.8 710.7 530.8 711.5 528.4Z" fill="url(#gt5)" stroke="url(#gt5)" stroke-width="1.4" stroke-linejoin="round"/>
<ellipse cx="722.1" cy="578.5" rx="10.6" ry="8.1" transform="rotate(0 722.1 578.5)" fill="#5a3a37" opacity="0.9"/>
<ellipse cx="720.0" cy="593.4" rx="11.7" ry="4.7" transform="rotate(5 720.0 593.4)" fill="#5a3a37" opacity="0.9"/>
<circle cx="741.3" cy="650.9" r="5.1" fill="#5a3a37" opacity="0.6"/>
<circle cx="653.9" cy="554.0" r="2.6" fill="#5a3a37" opacity="0.6"/>
</g>
<defs><linearGradient id="gt6" gradientUnits="userSpaceOnUse" x1="202" y1="0" x2="316" y2="0"><stop offset="0" stop-color="#6ea3b6"/><stop offset="0.45" stop-color="#467f93"/><stop offset="1" stop-color="#274f60"/></linearGradient></defs>
<g clip-path="url(#tc20)">
<path d="M254.2 991.6C257.4 987.7 267.8 988.0 273.6 987.7C279.4 987.4 283.3 988.7 289.2 989.6C295.0 990.6 303.1 991.9 308.6 993.5C314.1 995.1 323.3 998.7 322.0 999.3C320.7 1000.0 307.6 998.1 300.8 997.4C294.1 996.8 286.6 993.8 281.4 995.5C276.2 997.1 271.3 1003.9 269.7 1007.1C268.1 1010.4 273.3 1013.3 271.7 1014.9C270.1 1016.5 262.9 1017.5 260.0 1016.8C257.1 1016.2 255.2 1015.2 254.2 1011.0C253.2 1006.8 250.9 995.5 254.2 991.6Z" fill="#747474" />
<path d="M227.0 948.8C228.8 946.7 239.3 957.4 240.6 960.5C241.9 963.6 237.7 968.0 236.7 972.1C235.7 976.3 232.5 987.9 232.8 991.6C233.1 995.2 238.1 998.1 238.6 999.3C239.2 1000.6 238.2 1001.0 236.7 1001.3C235.1 1001.5 228.8 1002.1 227.0 1001.3C225.2 1000.5 223.1 998.8 223.1 995.5C223.1 992.1 226.5 982.2 227.0 976.0C227.5 969.8 225.2 950.9 227.0 948.8Z" fill="url(#gt6)" stroke="url(#gt6)" stroke-width="2.4" stroke-linejoin="round"/>
<path d="M203.7 917.7C205.0 914.9 206.8 907.1 211.4 906.1C216.1 905.0 233.5 907.1 238.6 910.0C243.8 912.8 248.0 922.3 250.3 927.4C252.6 932.6 254.8 944.7 256.1 948.8C257.4 953.0 259.8 954.9 260.0 958.5C260.3 962.2 258.6 968.5 258.1 976.0C257.6 983.5 255.1 1008.9 256.1 1014.9C257.2 1020.9 262.5 1018.7 265.8 1020.7C269.2 1022.8 278.8 1028.1 281.4 1030.4C284.0 1032.8 286.8 1036.9 285.3 1038.2C283.7 1039.5 273.9 1040.4 269.7 1040.2C265.6 1039.9 258.1 1037.3 254.2 1036.3C250.3 1035.2 242.4 1034.2 240.6 1032.4C238.8 1030.6 240.1 1025.5 240.6 1022.7C241.1 1019.8 244.2 1017.2 244.5 1011.0C244.7 1004.8 243.0 982.8 242.5 976.0C242.0 969.3 243.2 964.1 240.6 960.5C238.0 956.9 227.5 951.9 223.1 948.8C218.7 945.7 210.4 940.0 207.5 937.2C204.7 934.3 202.2 930.0 201.7 927.4C201.2 924.9 202.4 920.6 203.7 917.7Z" fill="url(#gt6)" stroke="url(#gt6)" stroke-width="2.4" stroke-linejoin="round"/>
<path d="M219.2 894.4C220.2 891.3 221.0 882.2 223.1 878.9C225.2 875.5 231.6 871.0 234.8 869.1C237.9 867.3 243.3 866.3 246.4 865.3C249.5 864.2 254.4 862.3 258.1 861.4C261.7 860.5 268.4 858.7 273.6 858.5C278.8 858.2 292.3 859.0 296.9 859.4C301.6 859.8 306.0 860.6 308.6 861.4C311.2 862.2 315.3 863.4 316.4 865.3C317.4 867.1 317.7 873.4 316.4 875.0C315.1 876.5 309.2 877.7 306.7 876.9C304.1 876.1 300.8 870.4 296.9 869.1C293.0 867.9 282.2 867.2 277.5 867.2C272.8 867.2 265.3 868.4 262.0 869.1C258.6 869.9 253.8 871.0 252.2 873.0C250.7 875.1 251.1 881.3 250.3 884.7C249.5 888.1 248.0 895.4 246.4 898.3C244.9 901.1 242.0 905.0 238.6 906.1C235.3 907.1 224.3 906.6 221.1 906.1C218.0 905.6 215.6 903.7 215.3 902.2C215.1 900.6 218.2 897.5 219.2 894.4Z" fill="url(#gt6)" stroke="url(#gt6)" stroke-width="2.4" stroke-linejoin="round"/>
<path d="M240.6 898.3C241.4 898.0 246.0 903.1 248.4 904.1C250.7 905.2 255.7 906.8 258.1 906.1C260.4 905.3 263.8 900.9 265.8 898.3C267.9 895.7 272.3 889.7 273.6 886.6C274.9 883.5 274.3 877.3 275.6 875.0C276.9 872.6 281.5 869.1 283.3 869.1C285.1 869.1 289.2 873.2 289.2 875.0C289.2 876.8 285.1 880.4 283.3 882.8C281.5 885.1 277.6 889.4 275.6 892.5C273.5 895.6 269.9 903.5 267.8 906.1C265.7 908.7 262.3 911.4 260.0 911.9C257.7 912.4 252.6 910.7 250.3 910.0C248.0 909.2 243.8 907.6 242.5 906.1C241.2 904.5 239.8 898.6 240.6 898.3Z" fill="url(#gt6)" stroke="url(#gt6)" stroke-width="2.4" stroke-linejoin="round"/>
<path d="M234.8 857.5C235.4 855.5 238.5 851.7 240.6 850.7C242.7 849.7 248.0 849.1 250.3 849.7C252.6 850.4 257.2 853.5 258.1 855.5C259.0 857.6 258.1 863.2 257.1 865.3C256.1 867.3 252.5 870.3 250.3 871.1C248.1 871.9 242.5 871.9 240.6 871.1C238.6 870.3 236.5 867.1 235.7 865.3C234.9 863.4 234.1 859.4 234.8 857.5Z" fill="url(#gt6)" stroke="url(#gt6)" stroke-width="2.4" stroke-linejoin="round"/>
<ellipse cx="231.8" cy="897.3" rx="10.7" ry="3.9" transform="rotate(10 231.8 897.3)" fill="#2f3538" opacity="0.9"/>
<ellipse cx="224.1" cy="913.8" rx="14.6" ry="3.9" transform="rotate(10 224.1 913.8)" fill="#2f3538" opacity="0.9"/>
<circle cx="299.9" cy="861.8" r="3.1" fill="#2f3538" opacity="0.6"/>
<circle cx="250.3" cy="1015.9" r="3.9" fill="#2f3538" opacity="0.6"/>
<circle cx="260.0" cy="861.4" r="3.4" fill="#2f3538" opacity="0.6"/>
<circle cx="252.2" cy="956.6" r="3.7" fill="#2f3538" opacity="0.6"/>
</g>
<defs><linearGradient id="gt7" gradientUnits="userSpaceOnUse" x1="401" y1="0" x2="528" y2="0"><stop offset="0" stop-color="#e0867b"/><stop offset="0.45" stop-color="#cf665b"/><stop offset="1" stop-color="#9a463f"/></linearGradient></defs>
<g clip-path="url(#tc21)">
<path d="M432.0 1021.1C433.1 1019.6 455.3 1014.1 465.3 1012.2C475.3 1010.4 483.5 1010.7 492.0 1010.0C500.5 1009.3 509.0 1008.1 516.4 1007.8C523.9 1007.4 532.2 1006.7 536.4 1007.8C540.7 1008.9 543.9 1013.3 542.0 1014.4C540.1 1015.6 530.3 1013.7 525.3 1014.4C520.3 1015.2 513.5 1015.6 512.0 1018.9C510.5 1022.2 517.6 1030.7 516.4 1034.4C515.3 1038.1 508.7 1042.6 505.3 1041.1C502.0 1039.6 501.3 1029.6 496.4 1025.6C491.6 1021.5 482.7 1017.4 476.4 1016.7C470.1 1015.9 466.1 1020.4 458.7 1021.1C451.3 1021.9 430.9 1022.6 432.0 1021.1Z" fill="#747474" />
<path d="M452.0 954.4C455.3 950.3 463.9 952.1 465.3 954.4C466.8 956.8 463.4 968.1 463.1 972.2C462.8 976.4 464.9 982.6 463.1 985.6C461.3 988.5 454.2 991.5 449.8 994.4C445.3 997.4 433.3 1005.4 429.8 1007.8C426.2 1010.1 423.1 1010.4 423.1 1012.2C423.1 1014.0 428.6 1019.0 429.8 1021.1C431.0 1023.2 432.9 1027.2 432.0 1027.8C431.1 1028.4 425.8 1027.3 423.1 1025.6C420.4 1023.8 413.2 1016.5 412.0 1014.4C410.8 1012.4 410.4 1013.9 414.2 1010.0C418.1 1006.1 435.9 993.0 440.9 985.6C445.9 978.1 448.7 958.6 452.0 954.4Z" fill="url(#gt7)" stroke="url(#gt7)" stroke-width="1.4" stroke-linejoin="round"/>
<path d="M449.8 925.6C451.0 922.3 455.1 915.9 458.7 914.4C462.2 913.0 473.2 913.3 476.4 914.4C479.7 915.6 482.2 920.4 483.1 923.3C484.0 926.3 482.5 932.5 483.1 936.7C483.7 940.8 485.5 950.9 487.6 954.4C489.6 958.0 496.9 960.4 498.7 963.3C500.4 966.3 501.2 973.7 500.9 976.7C500.6 979.6 497.0 979.0 496.4 985.6C495.9 992.1 496.7 1018.4 496.4 1025.6C496.1 1032.7 492.7 1035.9 494.2 1038.9C495.7 1041.9 504.9 1045.7 507.6 1047.8C510.2 1049.9 514.2 1053.0 514.2 1054.4C514.2 1055.9 510.5 1058.6 507.6 1058.9C504.6 1059.2 495.3 1057.9 492.0 1056.7C488.7 1055.5 484.0 1052.4 483.1 1050.0C482.2 1047.6 485.3 1044.5 485.3 1038.9C485.3 1033.3 483.7 1014.9 483.1 1007.8C482.5 1000.7 482.7 991.5 480.9 985.6C479.1 979.6 473.0 968.1 469.8 963.3C466.5 958.6 459.1 953.3 456.4 950.0C453.8 946.7 450.7 942.1 449.8 938.9C448.9 935.6 448.6 928.8 449.8 925.6Z" fill="url(#gt7)" stroke="url(#gt7)" stroke-width="1.4" stroke-linejoin="round"/>
<path d="M400.9 921.1C400.3 920.2 401.3 918.4 403.1 916.7C404.9 914.9 409.8 911.3 414.2 907.8C418.7 904.2 431.1 893.6 436.4 890.0C441.8 886.4 450.4 883.5 454.2 881.1C458.1 878.7 461.8 873.1 465.3 872.2C468.9 871.3 477.3 873.6 480.9 874.4C484.4 875.3 488.1 878.0 492.0 878.9C495.9 879.8 505.3 879.9 509.8 881.1C514.2 882.3 523.0 886.0 525.3 887.8C527.7 889.6 528.4 893.3 527.6 894.4C526.7 895.6 521.3 897.0 518.7 896.7C516.0 896.4 510.5 892.8 507.6 892.2C504.6 891.6 497.9 891.0 496.4 892.2C495.0 893.4 497.3 898.4 496.4 901.1C495.6 903.8 491.9 910.4 489.8 912.2C487.7 914.0 484.1 914.4 480.9 914.4C477.6 914.4 467.4 914.6 465.3 912.2C463.3 909.9 466.2 899.6 465.3 896.7C464.4 893.7 461.9 890.0 458.7 890.0C455.4 890.0 445.9 893.7 440.9 896.7C435.9 899.6 425.3 908.7 420.9 912.2C416.4 915.8 410.2 922.1 407.6 923.3C404.9 924.5 401.5 922.0 400.9 921.1Z" fill="url(#gt7)" stroke="url(#gt7)" stroke-width="1.4" stroke-linejoin="round"/>
<path d="M477.6 850.0C478.3 846.9 482.8 841.5 485.3 840.0C487.9 838.5 493.8 838.0 496.4 838.9C499.1 839.8 504.1 843.7 505.3 846.7C506.5 849.6 506.2 858.1 505.3 861.1C504.4 864.1 501.0 867.7 498.7 868.9C496.3 870.1 490.1 870.7 487.6 870.0C485.0 869.3 481.1 866.0 479.8 863.3C478.4 860.7 476.8 853.1 477.6 850.0Z" fill="url(#gt7)" stroke="url(#gt7)" stroke-width="1.4" stroke-linejoin="round"/>
<ellipse cx="475.3" cy="904.4" rx="10.7" ry="10.0" transform="rotate(0 475.3 904.4)" fill="#5a3a37" opacity="0.9"/>
<ellipse cx="469.8" cy="921.1" rx="13.8" ry="7.8" transform="rotate(0 469.8 921.1)" fill="#5a3a37" opacity="0.9"/>
<circle cx="485.3" cy="871.1" r="4.3" fill="#5a3a37" opacity="0.6"/>
<circle cx="463.1" cy="876.7" r="3.6" fill="#5a3a37" opacity="0.6"/>
<circle cx="494.2" cy="972.2" r="5.7" fill="#5a3a37" opacity="0.6"/>
<circle cx="456.4" cy="984.4" r="5.7" fill="#5a3a37" opacity="0.6"/>
</g>
<defs><linearGradient id="gt8" gradientUnits="userSpaceOnUse" x1="678" y1="0" x2="767" y2="0"><stop offset="0" stop-color="#e0867b"/><stop offset="0.45" stop-color="#cf665b"/><stop offset="1" stop-color="#9a463f"/></linearGradient></defs>
<g clip-path="url(#tc22)">
<path d="M698.1 1025.6C701.8 1023.0 723.3 1015.6 733.7 1012.2C744.0 1008.9 752.9 1006.3 760.3 1005.6C767.7 1004.8 774.4 1005.2 778.1 1007.8C781.8 1010.4 783.3 1017.4 782.6 1021.1C781.8 1024.8 777.0 1027.8 773.7 1030.0C770.3 1032.2 766.3 1034.4 762.6 1034.4C758.9 1034.4 760.0 1031.1 751.4 1030.0C742.9 1028.9 720.3 1028.5 711.4 1027.8C702.6 1027.0 694.4 1028.1 698.1 1025.6Z" fill="#747474" />
<path d="M700.3 925.6C702.1 923.2 707.0 919.5 711.4 918.9C715.9 918.3 730.1 919.9 733.7 921.1C737.2 922.3 737.2 925.1 738.1 927.8C739.0 930.4 738.9 937.0 740.3 941.1C741.8 945.3 747.1 953.6 749.2 958.9C751.3 964.2 755.6 975.8 755.9 981.1C756.2 986.4 751.7 993.0 751.4 998.9C751.1 1004.8 752.8 1020.8 753.7 1025.6C754.6 1030.3 756.3 1032.1 758.1 1034.4C759.9 1036.8 766.1 1041.3 767.0 1043.3C767.9 1045.4 766.9 1049.7 764.8 1050.0C762.7 1050.3 753.8 1048.2 751.4 1045.6C749.1 1042.9 748.2 1036.2 747.0 1030.0C745.8 1023.8 744.3 1007.2 742.6 998.9C740.8 990.6 735.7 974.3 733.7 967.8C731.6 961.3 729.1 952.4 727.0 950.0C724.9 947.6 720.5 950.6 718.1 950.0C715.7 949.4 711.0 943.8 709.2 945.6C707.4 947.3 707.1 958.0 704.8 963.3C702.4 968.7 692.6 979.6 691.4 985.6C690.3 991.5 695.6 1003.0 695.9 1007.8C696.2 1012.5 694.0 1018.1 693.7 1021.1C693.4 1024.1 695.4 1027.9 693.7 1030.0C691.9 1032.1 682.4 1036.7 680.3 1036.7C678.3 1036.7 677.5 1032.1 678.1 1030.0C678.7 1027.9 684.2 1025.3 684.8 1021.1C685.4 1017.0 682.6 1005.1 682.6 998.9C682.6 992.7 683.3 980.7 684.8 974.4C686.3 968.2 691.9 957.3 693.7 952.2C695.4 947.2 697.2 940.2 698.1 936.7C699.0 933.1 698.6 927.9 700.3 925.6Z" fill="url(#gt8)" stroke="url(#gt8)" stroke-width="1.4" stroke-linejoin="round"/>
<path d="M698.1 877.8C700.2 876.3 705.8 876.8 711.4 876.7C717.1 876.5 736.2 875.8 740.3 876.7C744.5 877.6 741.4 881.0 742.6 883.3C743.7 885.7 747.4 892.1 749.2 894.4C751.0 896.8 754.7 899.0 755.9 901.1C757.1 903.2 758.7 907.6 758.1 910.0C757.5 912.4 752.6 916.8 751.4 918.9C750.3 921.0 750.7 924.7 749.2 925.6C747.7 926.4 741.2 926.4 740.3 925.6C739.4 924.7 741.7 921.0 742.6 918.9C743.4 916.8 747.3 912.1 747.0 910.0C746.7 907.9 741.8 903.3 740.3 903.3C738.9 903.3 738.3 909.7 735.9 910.0C733.5 910.3 725.8 905.6 722.6 905.6C719.3 905.6 715.0 909.1 711.4 910.0C707.9 910.9 698.6 912.8 695.9 912.2C693.2 911.6 691.4 908.8 691.4 905.6C691.4 902.3 695.0 891.5 695.9 887.8C696.8 884.1 696.0 879.3 698.1 877.8Z" fill="url(#gt8)" stroke="url(#gt8)" stroke-width="1.4" stroke-linejoin="round"/>
<path d="M712.6 854.4C713.4 851.5 717.8 845.0 720.3 843.3C722.9 841.7 729.2 841.3 731.4 842.2C733.7 843.1 736.4 847.2 737.0 850.0C737.6 852.8 736.9 860.4 735.9 863.3C734.9 866.3 731.6 870.9 729.2 872.2C726.9 873.6 720.2 874.2 718.1 873.3C716.0 872.4 714.4 868.1 713.7 865.6C712.9 863.0 711.7 857.4 712.6 854.4Z" fill="url(#gt8)" stroke="url(#gt8)" stroke-width="1.4" stroke-linejoin="round"/>
<ellipse cx="720.3" cy="921.6" rx="13.3" ry="6.2" transform="rotate(0 720.3 921.6)" fill="#5a3a37" opacity="0.9"/>
<circle cx="719.2" cy="872.7" r="3.9" fill="#5a3a37" opacity="0.6"/>
<circle cx="689.2" cy="984.4" r="5.7" fill="#5a3a37" opacity="0.6"/>
<circle cx="749.2" cy="979.3" r="6.0" fill="#5a3a37" opacity="0.6"/>
<circle cx="698.1" cy="883.3" r="3.2" fill="#5a3a37" opacity="0.6"/>
<circle cx="739.2" cy="883.3" r="3.2" fill="#5a3a37" opacity="0.6"/>
</g>
</svg>
<svg class="abs" style="left:113px;top:377px" width="26" height="26" viewBox="0 0 26 26"><g fill="none" stroke="#8c8c8c" stroke-linecap="round" stroke-linejoin="round">
<ellipse cx="15.1" cy="3" rx="2.1" ry="2.7" fill="#8c8c8c" stroke="none"/><path d="M13 6.5L11 14.3" stroke-width="3.6"/><path d="M12.5 6.8L6.9 4.6L3.4 8.3M13.5 7.6L16.3 9.9L21 6.6M11 14.3L7.4 18.7L1.6 15.2M11.8 14.3L17.5 16.4L19.9 21.4L22.3 21.4" stroke-width="1.9"/></g></svg>
<svg class="abs" style="left:363px;top:377px" width="26" height="26" viewBox="0 0 26 26"><g fill="none" stroke="#8c8c8c" stroke-linecap="round" stroke-linejoin="round">
<ellipse cx="15.1" cy="3" rx="2.1" ry="2.7" fill="#8c8c8c" stroke="none"/><path d="M13 6.5L11 14.3" stroke-width="3.6"/><path d="M12.5 6.8L6.9 4.6L3.4 8.3M13.5 7.6L16.3 9.9L21 6.6M11 14.3L7.4 18.7L1.6 15.2M11.8 14.3L17.5 16.4L19.9 21.4L22.3 21.4" stroke-width="1.9"/></g></svg>
<svg class="abs" style="left:613px;top:377px" width="26" height="26" viewBox="0 0 26 26"><g fill="none" stroke="#8c8c8c" stroke-linecap="round" stroke-linejoin="round">
<ellipse cx="15.1" cy="3" rx="2.1" ry="2.7" fill="#8c8c8c" stroke="none"/><path d="M13 6.5L11 14.3" stroke-width="3.6"/><path d="M12.5 6.8L6.9 4.6L3.4 8.3M13.5 7.6L16.3 9.9L21 6.6M11 14.3L7.4 18.7L1.6 15.2M11.8 14.3L17.5 16.4L19.9 21.4L22.3 21.4" stroke-width="1.9"/></g></svg>
<svg class="abs" style="left:113px;top:705px" width="26" height="26" viewBox="0 0 26 26"><g fill="none" stroke="#8c8c8c" stroke-linecap="round" stroke-linejoin="round">
<ellipse cx="15.1" cy="3" rx="2.1" ry="2.7" fill="#8c8c8c" stroke="none"/><path d="M13 6.5L11 14.3" stroke-width="3.6"/><path d="M12.5 6.8L6.9 4.6L3.4 8.3M13.5 7.6L16.3 9.9L21 6.6M11 14.3L7.4 18.7L1.6 15.2M11.8 14.3L17.5 16.4L19.9 21.4L22.3 21.4" stroke-width="1.9"/></g></svg>
<svg class="abs" style="left:363px;top:705px" width="26" height="26" viewBox="0 0 26 26"><g fill="none" stroke="#8c8c8c" stroke-linecap="round" stroke-linejoin="round">
<ellipse cx="15.1" cy="3" rx="2.1" ry="2.7" fill="#8c8c8c" stroke="none"/><path d="M13 6.5L11 14.3" stroke-width="3.6"/><path d="M12.5 6.8L6.9 4.6L3.4 8.3M13.5 7.6L16.3 9.9L21 6.6M11 14.3L7.4 18.7L1.6 15.2M11.8 14.3L17.5 16.4L19.9 21.4L22.3 21.4" stroke-width="1.9"/></g></svg>
<svg class="abs" style="left:613px;top:705px" width="26" height="26" viewBox="0 0 26 26"><g fill="none" stroke="#8c8c8c" stroke-linecap="round" stroke-linejoin="round">
<ellipse cx="15.1" cy="3" rx="2.1" ry="2.7" fill="#8c8c8c" stroke="none"/><path d="M13 6.5L11 14.3" stroke-width="3.6"/><path d="M12.5 6.8L6.9 4.6L3.4 8.3M13.5 7.6L16.3 9.9L21 6.6M11 14.3L7.4 18.7L1.6 15.2M11.8 14.3L17.5 16.4L19.9 21.4L22.3 21.4" stroke-width="1.9"/></g></svg>
<svg class="abs" style="left:113px;top:1033px" width="26" height="26" viewBox="0 0 26 26"><g fill="none" stroke="#8c8c8c" stroke-linecap="round" stroke-linejoin="round">
<ellipse cx="15.1" cy="3" rx="2.1" ry="2.7" fill="#8c8c8c" stroke="none"/><path d="M13 6.5L11 14.3" stroke-width="3.6"/><path d="M12.5 6.8L6.9 4.6L3.4 8.3M13.5 7.6L16.3 9.9L21 6.6M11 14.3L7.4 18.7L1.6 15.2M11.8 14.3L17.5 16.4L19.9 21.4L22.3 21.4" stroke-width="1.9"/></g></svg>
<svg class="abs" style="left:363px;top:1033px" width="26" height="26" viewBox="0 0 26 26"><g fill="none" stroke="#8c8c8c" stroke-linecap="round" stroke-linejoin="round">
<ellipse cx="15.1" cy="3" rx="2.1" ry="2.7" fill="#8c8c8c" stroke="none"/><path d="M13 6.5L11 14.3" stroke-width="3.6"/><path d="M12.5 6.8L6.9 4.6L3.4 8.3M13.5 7.6L16.3 9.9L21 6.6M11 14.3L7.4 18.7L1.6 15.2M11.8 14.3L17.5 16.4L19.9 21.4L22.3 21.4" stroke-width="1.9"/></g></svg>
<svg class="abs" style="left:613px;top:1033px" width="26" height="26" viewBox="0 0 26 26"><g fill="none" stroke="#8c8c8c" stroke-linecap="round" stroke-linejoin="round">
<ellipse cx="15.1" cy="3" rx="2.1" ry="2.7" fill="#8c8c8c" stroke="none"/><path d="M13 6.5L11 14.3" stroke-width="3.6"/><path d="M12.5 6.8L6.9 4.6L3.4 8.3M13.5 7.6L16.3 9.9L21 6.6M11 14.3L7.4 18.7L1.6 15.2M11.8 14.3L17.5 16.4L19.9 21.4L22.3 21.4" stroke-width="1.9"/></g></svg>
<div class="abs txt" style="left:960px;top:88px;width:960px;text-align:center;font-size:13.8px;font-weight:bold;color:#222;letter-spacing:0.5px">Y BOT</div>
<svg class="abs" style="left:0;top:0" width="1920" height="1080" viewBox="0 0 1920 1080">
<defs><linearGradient id="vg" x1="0" y1="125" x2="0" y2="1017" gradientUnits="userSpaceOnUse">
<stop offset="0" stop-color="#a0a0a0"/><stop offset="0.1962" stop-color="#a0a0a0"/>
<stop offset="0.2691" stop-color="#bcbcbc"/><stop offset="0.3307" stop-color="#c4c4c4"/><stop offset="0.4765" stop-color="#cacaca"/><stop offset="0.7567" stop-color="#cccccc"/><stop offset="1" stop-color="#cecece"/></linearGradient>
<linearGradient id="fog" x1="0" y1="290" x2="0" y2="1017" gradientUnits="userSpaceOnUse">
<stop offset="0" stop-color="#a0a0a0" stop-opacity="1"/><stop offset="0.0138" stop-color="#a0a0a0" stop-opacity="1"/><stop offset="0.1032" stop-color="#bcbcbc" stop-opacity="1"/><stop offset="0.1788" stop-color="#c4c4c4" stop-opacity="0.95"/><stop offset="0.3164" stop-color="#c9c9c9" stop-opacity="0.76"/><stop offset="0.4539" stop-color="#cbcbcb" stop-opacity="0.5"/><stop offset="0.6327" stop-color="#cccccc" stop-opacity="0.2"/><stop offset="0.9078" stop-color="#cdcdcd" stop-opacity="0"/><stop offset="1" stop-color="#cecece" stop-opacity="0"/></linearGradient>
<clipPath id="vc"><rect x="960" y="125" width="640" height="893"/></clipPath></defs>
<g clip-path="url(#vc)">
<rect x="960" y="125" width="640" height="893" fill="url(#vg)"/>
<path d="M955.0 330.4L961.6 330.0M955.0 331.3L973.5 330.0M955.0 332.1L985.5 330.0M955.0 333.0L997.4 330.0M955.0 333.9L1009.3 330.0M955.0 334.8L1021.3 330.0M955.0 335.8L1033.2 330.0M955.0 336.8L1045.1 330.0M955.0 337.8L1056.9 330.0M955.0 338.8L1068.8 330.0M955.0 339.9L1080.7 330.0M955.0 341.0L1092.5 330.0M955.0 342.2L1104.3 330.0M955.0 343.3L1116.2 330.0M955.0 344.6L1128.0 330.0M955.0 345.8L1139.8 330.0M955.0 347.1L1151.6 330.0M955.0 348.5L1163.3 330.0M955.0 349.9L1175.1 330.0M955.0 351.3L1186.8 330.0M955.0 352.9L1198.6 330.0M955.0 354.4L1210.3 330.0M955.0 356.0L1222.0 330.0M955.0 357.7L1233.7 330.0M955.0 359.5L1245.4 330.0M955.0 361.3L1257.1 330.0M955.0 363.2L1268.7 330.0M955.0 365.2L1280.4 330.0M955.0 367.2L1292.0 330.0M955.0 369.4L1303.6 330.0M955.0 371.6L1315.2 330.0M955.0 374.0L1326.8 330.0M955.0 376.5L1338.4 330.0M955.0 379.1L1350.0 330.0M955.0 381.8L1361.6 330.0M955.0 384.6L1373.1 330.0M955.0 387.6L1384.7 330.0M955.0 390.8L1396.2 330.0M955.0 394.1L1407.7 330.0M955.0 397.7L1419.2 330.0M955.0 401.4L1430.7 330.0M955.0 405.3L1442.2 330.0M955.0 409.5L1453.7 330.0M955.0 414.0L1465.1 330.0M955.0 418.8L1476.6 330.0M955.0 423.9L1488.0 330.0M955.0 429.3L1499.5 330.0M955.0 435.2L1510.9 330.0M955.0 441.5L1522.3 330.0M955.0 448.3L1533.7 330.0M955.0 455.6L1545.0 330.0M955.0 463.6L1556.4 330.0M955.0 472.3L1567.8 330.0M955.0 481.8L1579.1 330.0M955.0 492.3L1590.4 330.0M955.0 503.8L1601.8 330.0M955.0 516.6L1605.0 332.3M955.0 530.9L1605.0 335.8M955.0 546.9L1605.0 339.8M955.0 565.1L1605.0 344.2M955.0 585.7L1605.0 349.3M955.0 609.5L1605.0 355.2M955.0 637.1L1605.0 362.0M955.0 669.7L1605.0 370.1M955.0 708.5L1605.0 379.7M955.0 755.8L1605.0 391.3M955.0 814.4L1605.0 405.8M955.0 889.0L1605.0 424.2M955.0 987.4L1605.0 448.5M1056.3 1023.0L1605.0 481.9M1200.4 1023.0L1605.0 530.9M1344.4 1023.0L1605.0 609.7M1488.3 1023.0L1605.0 757.1M1605.0 330.1L1601.4 330.0M1605.0 330.7L1582.2 330.0M1605.0 331.2L1562.9 330.0M1605.0 331.8L1543.5 330.0M1605.0 332.4L1524.2 330.0M1605.0 333.0L1504.7 330.0M1605.0 333.7L1485.3 330.0M1605.0 334.3L1465.8 330.0M1605.0 335.0L1446.3 330.0M1605.0 335.6L1426.8 330.0M1605.0 336.3L1407.2 330.0M1605.0 337.0L1387.6 330.0M1605.0 337.7L1368.0 330.0M1605.0 338.4L1348.3 330.0M1605.0 339.1L1328.6 330.0M1605.0 339.9L1308.8 330.0M1605.0 340.7L1289.1 330.0M1605.0 341.5L1269.2 330.0M1605.0 342.3L1249.4 330.0M1605.0 343.1L1229.5 330.0M1605.0 343.9L1209.6 330.0M1605.0 344.8L1189.6 330.0M1605.0 345.7L1169.6 330.0M1605.0 346.6L1149.6 330.0M1605.0 347.5L1129.6 330.0M1605.0 348.5L1109.5 330.0M1605.0 349.5L1089.3 330.0M1605.0 350.5L1069.2 330.0M1605.0 351.5L1049.0 330.0M1605.0 352.5L1028.7 330.0M1605.0 353.6L1008.5 330.0M1605.0 354.7L988.1 330.0M1605.0 355.9L967.8 330.0M1605.0 357.0L955.0 330.3M1605.0 358.3L955.0 331.2M1605.0 359.5L955.0 332.0M1605.0 360.8L955.0 333.0M1605.0 362.1L955.0 333.9M1605.0 363.4L955.0 334.8M1605.0 364.8L955.0 335.8M1605.0 366.3L955.0 336.8M1605.0 367.8L955.0 337.9M1605.0 369.3L955.0 339.0M1605.0 370.9L955.0 340.1M1605.0 372.5L955.0 341.3M1605.0 374.2L955.0 342.5M1605.0 375.9L955.0 343.7M1605.0 377.7L955.0 345.0M1605.0 379.6L955.0 346.3M1605.0 381.5L955.0 347.7M1605.0 383.6L955.0 349.1M1605.0 385.6L955.0 350.5M1605.0 387.8L955.0 352.1M1605.0 390.0L955.0 353.7M1605.0 392.4L955.0 355.3M1605.0 394.8L955.0 357.0M1605.0 397.3L955.0 358.8M1605.0 399.9L955.0 360.7M1605.0 402.7L955.0 362.6M1605.0 405.5L955.0 364.6M1605.0 408.5L955.0 366.7M1605.0 411.6L955.0 368.9M1605.0 414.9L955.0 371.3M1605.0 418.3L955.0 373.7M1605.0 421.9L955.0 376.2M1605.0 425.6L955.0 378.9M1605.0 429.6L955.0 381.7M1605.0 433.8L955.0 384.6M1605.0 438.2L955.0 387.7M1605.0 442.8L955.0 391.0M1605.0 447.7L955.0 394.5M1605.0 452.9L955.0 398.2M1605.0 458.4L955.0 402.1M1605.0 464.2L955.0 406.2M1605.0 470.5L955.0 410.6M1605.0 477.1L955.0 415.3M1605.0 484.2L955.0 420.4M1605.0 491.8L955.0 425.7M1605.0 500.0L955.0 431.5M1605.0 508.8L955.0 437.8M1605.0 518.3L955.0 444.5M1605.0 528.6L955.0 451.8M1605.0 539.8L955.0 459.7M1605.0 552.0L955.0 468.3M1605.0 565.4L955.0 477.8M1605.0 580.1L955.0 488.2M1605.0 596.3L955.0 499.7M1605.0 614.4L955.0 512.5M1605.0 634.6L955.0 526.8M1605.0 657.3L955.0 542.9M1605.0 683.1L955.0 561.2M1605.0 712.5L955.0 582.0M1605.0 746.5L955.0 606.1M1605.0 786.1L955.0 634.1M1605.0 833.0L955.0 667.3M1605.0 889.2L955.0 707.1M1605.0 958.0L955.0 755.8M1545.0 1023.0L955.0 816.7M1275.5 1023.0L955.0 895.0M1005.5 1023.0L955.0 999.5" stroke="#7e7e7e" stroke-width="1.3" fill="none"/>
<rect x="960" y="290" width="640" height="727" fill="url(#fog)"/>

<defs>
<linearGradient id="gArmR" gradientUnits="userSpaceOnUse" x1="1460" y1="402" x2="1460" y2="440" gradientTransform="rotate(5 1460 420)"><stop offset="0" stop-color="#86b4c4"/><stop offset="0.3" stop-color="#6a9fb2"/><stop offset="0.6" stop-color="#4a8397"/><stop offset="1" stop-color="#2a5a6c"/></linearGradient><linearGradient id="gArmL" gradientUnits="userSpaceOnUse" x1="1150" y1="390" x2="1150" y2="424" gradientTransform="rotate(3 1150 405)"><stop offset="0" stop-color="#86b4c4"/><stop offset="0.3" stop-color="#6a9fb2"/><stop offset="0.6" stop-color="#4a8397"/><stop offset="1" stop-color="#2a5a6c"/></linearGradient>
<linearGradient id="gLegL" x1="0" y1="0" x2="1" y2="0"><stop offset="0" stop-color="#5a92a6"/><stop offset="0.25" stop-color="#6aa0b3"/><stop offset="0.55" stop-color="#437a8e"/><stop offset="1" stop-color="#275668"/></linearGradient>
<linearGradient id="gLegR" x1="0" y1="0" x2="1" y2="0"><stop offset="0" stop-color="#5890a4"/><stop offset="0.4" stop-color="#437b8f"/><stop offset="0.6" stop-color="#2f6477"/><stop offset="1" stop-color="#244f60"/></linearGradient>
<linearGradient id="gChest" x1="0" y1="0" x2="1" y2="1"><stop offset="0" stop-color="#7aabbd"/><stop offset="0.42" stop-color="#86b3c3"/><stop offset="0.62" stop-color="#538b9f"/><stop offset="1" stop-color="#28586a"/></linearGradient>
<linearGradient id="gHead" x1="0" y1="0" x2="1" y2="0.3"><stop offset="0" stop-color="#6ea3b5"/><stop offset="0.5" stop-color="#477e92"/><stop offset="1" stop-color="#2a5a6b"/></linearGradient>
<linearGradient id="gBlock" x1="0" y1="0" x2="0.3" y2="1"><stop offset="0" stop-color="#74a7b9"/><stop offset="0.5" stop-color="#518a9e"/><stop offset="1" stop-color="#336a7e"/></linearGradient>
<linearGradient id="gFoot" x1="0" y1="0" x2="1" y2="1"><stop offset="0" stop-color="#5f96a9"/><stop offset="0.5" stop-color="#78aabb"/><stop offset="1" stop-color="#386e82"/></linearGradient>
</defs>
<path d="M1282.0 654.0L1290.0 655.0L1325.0 665.0L1343.0 668.0L1352.0 669.0L1373.0 674.0L1397.0 677.5L1430.0 680.0L1437.0 673.0L1453.0 670.8L1468.0 675.8L1465.0 685.0L1480.0 690.8L1513.0 699.0L1538.0 707.5L1590.0 720.0L1605.0 723.0L1605.0 735.0L1593.0 728.0L1535.0 716.7L1497.0 708.3L1458.0 713.3L1435.0 720.0L1423.0 733.3L1417.0 743.3L1395.0 756.7L1373.0 770.0L1343.0 776.7L1328.0 788.3L1322.0 798.3L1318.0 807.0L1310.0 800.0L1322.0 785.0L1346.0 767.0L1370.0 755.0L1380.0 743.0L1371.0 741.0L1343.0 748.0L1320.0 760.0L1300.0 770.0L1300.0 745.0L1320.0 738.0L1335.0 725.0L1373.0 707.0L1387.0 698.0L1388.0 688.0L1373.0 683.0L1328.0 674.0L1290.0 667.0L1282.0 665.0Z" fill="#000" fill-opacity="0.47"/>
<path d="M1230.0 389.8L1217.5 391.4L1202.9 395.0L1180.0 390.3L1169.6 392.4L1148.8 389.8L1121.7 390.8L1113.3 394.0L1098.8 391.9L1086.2 395.0L1071.7 394.5L1063.3 396.6L1062.3 399.2L1064.4 401.2L1084.2 404.4L1091.5 406.5L1082.0 411.7L1073.8 419.0L1073.8 423.1L1079.0 423.1L1094.6 414.8L1101.9 409.6L1119.6 408.5L1148.8 412.7L1171.7 419.0L1180.0 418.0L1200.8 418.0L1225.8 425.2L1230.0 426.8Z" fill="url(#gArmL)" stroke="#4d869a" stroke-width="0.8" stroke-linejoin="round"/>
<path d="M1169.0 391.0L1173.0 391.0L1177.0 419.0L1172.0 419.0Z" fill="#2c3134" />
<circle cx="1101" cy="406" r="3.6" fill="#3e4448"/>
<path d="M1335.0 389.0L1350.2 393.1L1351.6 400.7L1362.6 399.3L1387.5 407.6L1412.3 405.5L1428.9 407.6L1452.3 409.0L1480.0 415.2L1500.6 418.6L1514.4 420.7L1539.3 424.2L1550.3 427.0L1583.4 431.1L1588.3 434.5L1584.8 437.3L1550.3 438.0L1533.8 440.7L1544.8 460.0L1539.3 462.8L1525.5 447.6L1513.0 438.0L1500.6 439.4L1484.1 438.0L1448.2 431.1L1424.7 439.4L1390.2 436.6L1362.6 435.2L1335.0 438.0Z" fill="url(#gArmR)" stroke="#4d869a" stroke-width="0.8" stroke-linejoin="round"/>
<path d="M1418.0 405.0L1424.0 406.0L1426.0 439.0L1419.0 439.0Z" fill="#2c3134" />
<ellipse cx="1507" cy="429" rx="4.5" ry="9.5" fill="#33393c"/>
<path d="M1244.0 664.0L1280.0 664.0L1284.0 676.0L1244.0 676.0Z" fill="#2c3134" />
<path d="M1285.0 672.0L1328.0 666.0L1330.0 682.0L1287.0 684.0Z" fill="#2c3134" />
<path d="M1236.0 548.0L1330.0 538.0L1334.0 572.0L1286.0 594.0L1250.0 587.0Z" fill="#2c3134" />
<path d="M1227.0 553.0C1229.4 550.4 1241.0 558.9 1246.7 562.0C1252.4 565.1 1271.6 575.6 1276.0 580.0C1280.4 584.4 1283.3 595.3 1284.0 600.0C1284.7 604.7 1282.9 613.0 1282.2 620.0C1281.5 627.0 1278.8 653.8 1277.8 660.0C1276.8 666.2 1276.9 671.7 1273.3 673.3C1269.7 674.9 1250.2 676.4 1246.7 673.3C1243.2 670.2 1244.8 653.4 1243.0 646.7C1241.2 640.0 1233.0 622.9 1231.0 615.6C1229.0 608.3 1226.5 591.7 1226.0 584.4C1225.5 577.1 1224.6 555.6 1227.0 553.0Z" fill="url(#gLegL)" />
<path d="M1286.0 590.0C1289.5 584.7 1308.2 570.0 1313.3 566.0C1318.4 562.0 1327.5 553.9 1330.0 556.0C1332.5 558.1 1334.5 578.0 1335.0 584.4C1335.5 590.8 1334.9 601.2 1334.0 611.1C1333.1 621.0 1330.5 660.6 1327.0 668.9C1323.5 677.2 1309.1 680.9 1304.4 682.2C1299.7 683.5 1289.0 685.2 1286.7 680.0C1284.4 674.8 1284.8 645.8 1284.4 637.8C1284.0 629.8 1282.8 616.7 1283.0 611.1C1283.2 605.5 1282.5 595.3 1286.0 590.0Z" fill="url(#gLegR)" />
<path d="M1242.6 668.5C1246.9 666.6 1276.8 667.2 1281.5 670.4C1286.2 673.6 1284.0 689.6 1283.3 696.3C1282.6 703.0 1276.1 721.1 1275.9 727.8C1275.7 734.5 1281.3 749.4 1281.5 753.7C1281.7 758.0 1280.8 763.3 1277.8 764.8C1274.8 766.3 1258.3 769.3 1255.6 766.7C1252.9 764.1 1255.5 749.7 1254.6 742.6C1253.7 735.5 1249.3 712.1 1248.1 705.6C1246.9 699.1 1245.0 691.3 1244.4 687.0C1243.8 682.7 1238.3 670.4 1242.6 668.5Z" fill="url(#gLegL)" />
<path d="M1287.0 677.8C1291.3 674.8 1322.8 673.7 1327.8 675.9C1332.8 678.1 1330.3 688.5 1329.6 696.3C1328.9 704.1 1323.1 732.9 1322.2 742.6C1321.3 752.3 1325.0 775.5 1322.2 779.6C1319.4 783.7 1300.9 782.1 1298.1 777.8C1295.3 773.5 1299.0 751.5 1298.1 742.6C1297.2 733.7 1292.0 709.5 1290.7 701.9C1289.4 694.3 1282.7 680.8 1287.0 677.8Z" fill="url(#gLegR)" />
<path d="M1255.6 764.8C1260.4 762.6 1275.2 762.6 1277.8 764.8C1280.4 767.0 1278.5 780.3 1277.8 783.3C1277.1 786.3 1275.0 788.3 1272.2 790.7C1269.4 793.1 1256.3 801.1 1253.7 803.7C1251.1 806.3 1251.5 811.4 1250.0 813.0C1248.5 814.6 1243.3 817.8 1240.7 817.6C1238.1 817.4 1229.5 812.9 1227.8 811.1C1226.1 809.3 1225.3 803.6 1225.9 801.9C1226.5 800.2 1232.0 798.5 1233.3 796.3C1234.6 794.1 1234.4 787.0 1237.0 783.3C1239.6 779.6 1250.8 767.0 1255.6 764.8Z" fill="url(#gFoot)" />
<path d="M1294.4 775.9C1297.6 774.6 1317.2 777.2 1320.4 779.6C1323.6 782.0 1323.3 792.0 1322.2 796.3C1321.1 800.6 1313.3 813.2 1311.1 816.7C1308.9 820.2 1307.4 824.5 1303.7 825.9C1300.0 827.3 1283.1 829.1 1279.6 828.7C1276.1 828.3 1273.9 825.1 1274.1 822.2C1274.3 819.3 1279.3 807.4 1281.5 803.7C1283.7 800.0 1291.1 793.9 1292.6 790.7C1294.1 787.5 1291.2 777.2 1294.4 775.9Z" fill="url(#gFoot)" />
<path d="M1256.0 764.0L1278.0 763.0L1279.0 768.0L1256.0 769.0Z" fill="#2c3134" opacity="0.8"/>
<path d="M1298.0 776.0L1322.0 778.0L1322.0 783.0L1298.0 781.0Z" fill="#2c3134" opacity="0.8"/>
<path d="M1236.0 517.0C1238.5 514.2 1255.6 521.0 1262.0 521.0C1268.4 521.0 1293.4 517.1 1300.0 517.0C1306.6 516.9 1324.9 517.3 1328.0 520.0C1331.1 522.7 1331.7 540.6 1331.0 544.0C1330.3 547.4 1325.6 549.8 1321.0 554.0C1316.4 558.2 1291.4 583.5 1285.0 586.0C1278.6 588.5 1261.8 582.7 1257.0 579.0C1252.2 575.3 1239.1 555.2 1237.0 549.0C1234.9 542.8 1233.5 519.8 1236.0 517.0Z" fill="url(#gBlock)" />
<path d="M1243.0 523.0C1246.4 520.5 1272.1 523.0 1280.0 522.0C1287.9 521.0 1317.4 512.0 1322.0 513.0C1326.6 514.0 1329.2 528.8 1326.0 532.0C1322.8 535.2 1298.0 543.5 1290.0 545.0C1282.0 546.5 1250.7 549.2 1246.0 547.0C1241.3 544.8 1239.6 525.5 1243.0 523.0Z" fill="#3a4144" />
<path d="M1244.0 478.0L1320.0 458.0L1323.0 486.0L1244.0 495.0Z" fill="#2c3134" />
<path d="M1244.4 476.7C1247.4 473.2 1273.7 484.0 1280.0 484.4C1286.3 484.8 1316.5 479.4 1320.0 481.1C1323.5 482.8 1325.3 501.1 1322.0 505.0C1318.7 508.9 1286.5 526.2 1280.0 528.0C1273.5 529.8 1247.4 530.3 1244.4 526.0C1241.4 521.7 1241.4 480.2 1244.4 476.7Z" fill="url(#gBlock)" />
<path d="M1229.6 389.4C1233.2 385.8 1257.3 383.6 1264.6 383.5C1271.9 383.4 1294.9 387.4 1302.5 388.0C1310.1 388.6 1335.5 388.5 1340.4 389.4C1345.4 390.3 1351.7 395.1 1352.0 396.7C1352.3 398.3 1344.9 403.1 1343.3 405.4C1341.7 407.7 1337.0 416.2 1336.0 420.0C1335.0 423.8 1334.6 438.6 1333.0 443.3C1331.4 448.0 1322.5 463.2 1320.0 466.7C1317.5 470.2 1312.1 476.8 1308.3 478.3C1304.5 479.8 1288.4 481.6 1282.0 481.3C1275.6 481.0 1249.2 478.0 1244.2 475.4C1239.2 472.8 1234.1 460.5 1232.5 455.0C1230.9 449.5 1228.4 426.6 1228.1 420.0C1227.8 413.4 1225.9 393.0 1229.6 389.4Z" fill="url(#gChest)" />
<path d="M1232.0 418.0L1262.0 440.0L1270.0 470.0L1250.0 466.0L1236.0 450.0Z" fill="#6fa3b5" opacity="0.7"/>
<path d="M1336.0 425.0L1333.0 443.0L1320.0 466.0L1308.0 478.0L1296.0 474.0L1312.0 445.0Z" fill="#244f5e" opacity="0.7"/>
<path d="M1270.0 376.0C1273.0 374.8 1296.7 379.8 1300.0 382.0C1303.3 384.2 1304.5 395.8 1303.0 398.0C1301.5 400.2 1288.3 404.4 1285.0 404.0C1281.7 403.6 1271.5 396.8 1270.0 394.0C1268.5 391.2 1267.0 377.2 1270.0 376.0Z" fill="#2c3134" />
<path d="M1272.0 394.0C1274.8 393.0 1299.2 391.0 1302.0 392.0C1304.8 393.0 1301.8 402.2 1300.0 404.0C1298.2 405.8 1286.6 410.2 1284.0 410.0C1281.4 409.8 1275.2 403.6 1274.0 402.0C1272.8 400.4 1269.2 395.0 1272.0 394.0Z" fill="#2f6375" />
<path d="M1282.1 300.4C1287.0 300.2 1291.8 299.0 1296.7 301.9C1301.6 304.8 1308.1 311.8 1311.2 317.9C1314.3 324.0 1315.6 332.0 1315.6 338.3C1315.6 344.6 1314.3 350.0 1311.2 355.8C1308.1 361.6 1301.6 368.9 1296.7 373.3C1291.8 377.7 1286.5 380.4 1282.1 382.1C1277.7 383.8 1273.8 385.0 1270.4 383.5C1267.0 382.0 1264.1 377.4 1261.7 373.3C1259.3 369.2 1257.4 365.1 1255.8 358.8C1254.2 352.5 1252.3 342.7 1252.3 335.4C1252.3 328.1 1253.3 320.4 1255.8 315.0C1258.3 309.6 1263.1 305.7 1267.5 303.3C1271.9 300.9 1277.2 300.6 1282.1 300.4Z" fill="url(#gHead)" />
<path d="M1284.0 312.0C1287.3 306.7 1295.7 313.3 1300.0 318.0C1304.3 322.7 1309.0 333.0 1310.0 340.0C1311.0 347.0 1309.3 354.0 1306.0 360.0C1302.7 366.0 1295.0 372.7 1290.0 376.0C1285.0 379.3 1277.7 384.3 1276.0 380.0C1274.3 375.7 1278.7 361.3 1280.0 350.0C1281.3 338.7 1280.7 317.3 1284.0 312.0Z" fill="#3f7689" opacity="0.85"/>
</g></svg>
<svg class="abs" style="left:970px;top:832px" width="30" height="170" viewBox="0 0 30 170" fill="#acacac">
<g transform="translate(14,15)"><path d="M-9 -1a9 9.5 0 0 1 18 0v4l-3 3v3h-12v-3l-3-3z"/><circle cx="-3.5" cy="0" r="2.6" fill="#cecece"/><circle cx="3.5" cy="0" r="2.6" fill="#cecece"/><path d="M0 3.5l-1.2 2.5h2.4z" fill="#cecece"/></g>
<g fill="none" stroke="#acacac" stroke-width="2.2">
<path d="M11.8 49.6A6.2 6.2 0 1 1 7.6 55.2" stroke-width="2.4"/><path d="M7.2 49.2v4.6h4.6" stroke-width="2.4"/>
<path d="M15 74v16M7 82h16" stroke-width="2.8"/></g><g fill="#acacac"><path d="M11 75.5l4-4.5 4 4.5zM11 88.5l4 4.5 4-4.5zM8.5 78l-4.5 4 4.5 4zM21.5 78l4.5 4-4.5 4z"/></g>
<g fill="none" stroke="#acacac" stroke-width="2.2">
<circle cx="13" cy="107" r="5.6"/><path d="M17 111l4 4" stroke-width="2.6"/>
<path d="M9.5 128.5a6.5 6.5 0 1 0 8 0"/><path d="M13.5 125v7"/>
</g>
<path d="M6 154a2 2 0 0 1 2-2h10a2 2 0 0 1 2 2v3l4-3.5v11l-4-3.5v3a2 2 0 0 1 -2 2h-10a2 2 0 0 1 -2-2z"/>
</svg>
<div class="abs" style="left:960px;top:1018px;width:640px;height:62px;background:#fff"></div>
<div class="abs" style="left:1009px;top:1018px;width:1px;height:62px;background:#e6e6e6"></div>
<div class="abs" style="left:977px;top:1041px;width:7px;height:15px;background:#c8c8c8"></div><div class="abs" style="left:986px;top:1041px;width:7px;height:15px;background:#c8c8c8"></div>
<div class="abs txt" style="left:1041px;top:1042px;font-size:14px;color:#aaa"><b>0</b> / 0</div>
<div class="abs" style="left:1112px;top:1045px;width:474px;height:8px;border-radius:4px;background:#eeedeb"></div>
<div class="abs" style="left:1109px;top:1040px;width:18px;height:18px;border-radius:9px;background:#c8c8c8"></div>
<div class="abs" style="left:1600px;top:125px;width:320px;height:955px;background:#fff;border-left:1px solid #e4e4e4;border-top:1px solid #e4e4e4"></div>
<div class="abs" style="left:1600px;top:234px;width:320px;height:1px;background:#e4e4e4"></div>
<div class="abs" style="left:1611px;top:138px;width:298px;height:39px;background:#ff9230;border-radius:3px"></div>
<div class="abs txt" style="left:1611px;top:150.5px;width:298px;text-align:center;font-size:14.3px;font-weight:bold;color:#fff;letter-spacing:0.7px">DOWNLOAD</div>
<div class="abs" style="left:1611px;top:183px;width:298px;height:40px;background:#f2f2f2;border:1px solid #d4d4d4;border-radius:3px"></div>
<div class="abs txt" style="left:1611px;top:196.5px;width:298px;text-align:center;font-size:14.3px;font-weight:bold;color:#555;letter-spacing:0.35px">UPLOAD CHARACTER</div>
<div class="abs" style="left:1612px;top:247px;width:295px;height:39px;background:#f2f2f2;border:1px solid #d4d4d4;border-radius:3px"></div>
<svg class="abs" style="left:1683px;top:258px" width="16" height="16" viewBox="0 0 16 16"><circle cx="6.8" cy="6.8" r="4.7" fill="none" stroke="#555" stroke-width="2"/><path d="M10.2 10.2l3.6 3.6" stroke="#555" stroke-width="2.4" stroke-linecap="round"/></svg>
<div class="abs txt" style="left:1701px;top:259.5px;font-size:14.3px;font-weight:bold;color:#555;letter-spacing:0.5px">FIND ANIMATIONS</div>
</body></html>
